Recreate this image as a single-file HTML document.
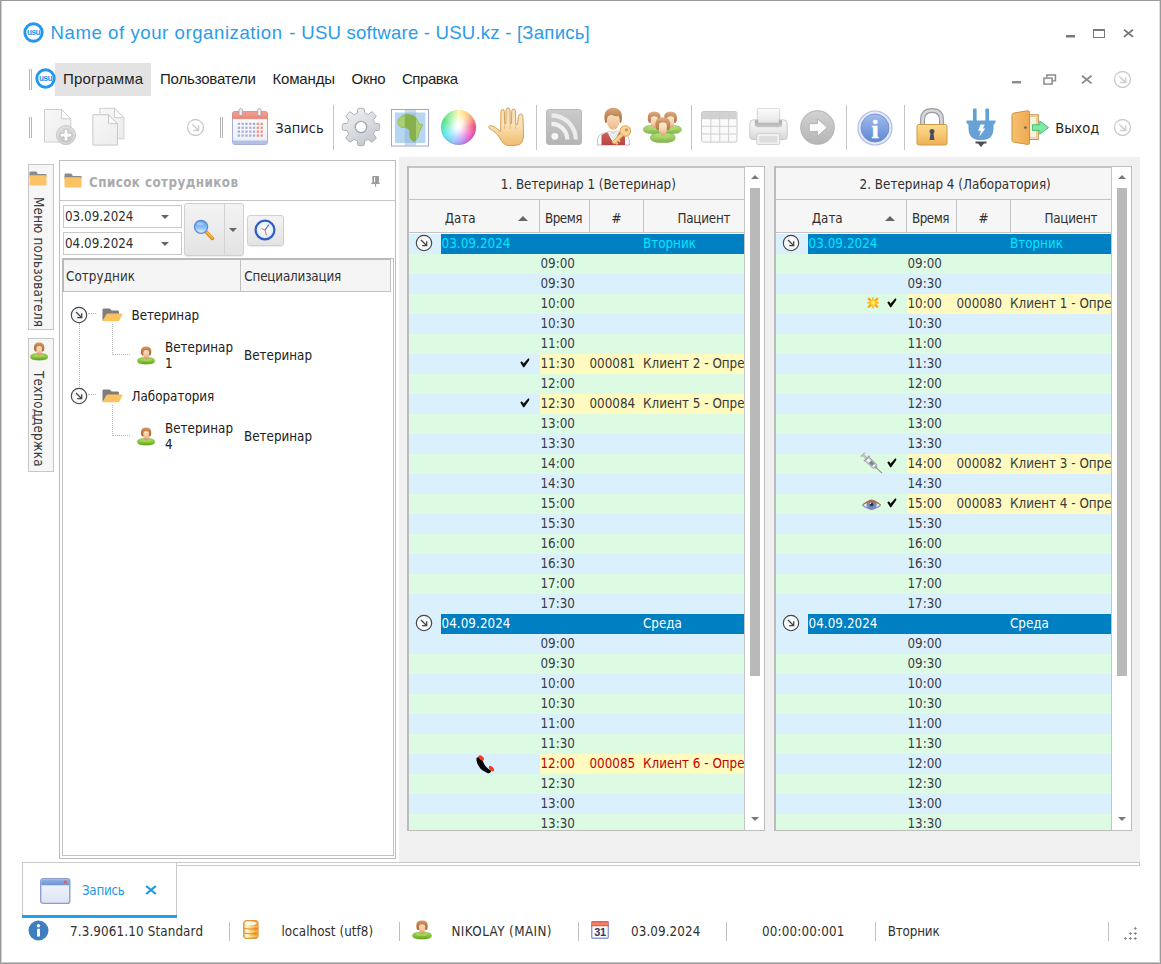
<!DOCTYPE html>
<html lang="ru"><head><meta charset="utf-8"><title>USU</title>
<style>
html,body{margin:0;padding:0;background:#fff;}
body{width:1161px;height:964px;position:relative;overflow:hidden;font-family:'DejaVu Sans Condensed','Liberation Sans',sans-serif;}
#win{position:absolute;left:0;top:0;width:1161px;height:964px;box-sizing:border-box;border:1px solid #9a9a9a;box-shadow:inset 1px 0 0 #d2d2d2,inset -1px 0 0 #e0e0e0,inset 0 -1px 0 #c6c6c6;pointer-events:none}
svg{display:block;width:100%;height:100%;overflow:visible}
</style></head><body>
<div style="position:absolute;left:23.3px;top:21.6px;width:21px;height:21px"><svg viewBox="0 0 21 21" preserveAspectRatio="none"><circle cx="10.5" cy="10.5" r="8.7" fill="#fff" stroke="#2496ee" stroke-width="2.9"/><text x="10.5" y="13.4" text-anchor="middle" font-family="Liberation Sans,sans-serif" font-weight="bold" font-size="8.2" fill="#2496ee" letter-spacing="-0.5">usu</text></svg></div>
<div style="position:absolute;left:50.5px;top:20px;height:26px;line-height:26px;font-family:'Liberation Sans',sans-serif;font-size:18.6px;color:#2b9ce8;white-space:nowrap;letter-spacing:0.559px;">Name of your organization</div>
<div style="position:absolute;left:289.3px;top:20px;height:26px;line-height:26px;font-family:'Liberation Sans',sans-serif;font-size:18.6px;color:#2b9ce8;white-space:nowrap;">-</div>
<div style="position:absolute;left:301.3px;top:20px;height:26px;line-height:26px;font-family:'Liberation Sans',sans-serif;font-size:18.6px;color:#2b9ce8;white-space:nowrap;letter-spacing:0.206px;">USU software - USU.kz - [Запись]</div>
<div style="position:absolute;left:1066px;top:35px;width:9px;height:2px;background:#7a7a7a"></div>
<div style="position:absolute;left:1066px;top:37px;width:9px;height:1px;background:#bcbcbc"></div>
<div style="position:absolute;left:1093px;top:29px;width:12px;height:9px;border:1px solid #7a7a7a;border-top:2px solid #7a7a7a;box-sizing:border-box"></div>
<div style="position:absolute;left:1122.5px;top:29px;width:11px;height:8.6px"><svg viewBox="0 0 11 10" preserveAspectRatio="none"><path d="M1 0.8 L10 9.2 M10 0.8 L1 9.2" stroke="#777" stroke-width="1.9" fill="none"/></svg></div>
<div style="position:absolute;left:29px;top:69px;width:1px;height:21px;background:#b5b5b5"></div>
<div style="position:absolute;left:31px;top:69px;width:1px;height:21px;background:#b5b5b5"></div>
<div style="position:absolute;left:55px;top:63px;width:96px;height:33px;background:#e3e3e3"></div>
<div style="position:absolute;left:34.6px;top:68.2px;width:21px;height:21px"><svg viewBox="0 0 21 21" preserveAspectRatio="none"><circle cx="10.5" cy="10.5" r="8.7" fill="#fff" stroke="#2496ee" stroke-width="2.9"/><text x="10.5" y="13.4" text-anchor="middle" font-family="Liberation Sans,sans-serif" font-weight="bold" font-size="8.2" fill="#2496ee" letter-spacing="-0.5">usu</text></svg></div>
<div style="position:absolute;left:63px;top:69px;height:20px;line-height:20px;font-family:'Liberation Sans',sans-serif;font-size:15px;color:#1e1e1e;white-space:nowrap;letter-spacing:0.176px;">Программа</div>
<div style="position:absolute;left:160px;top:69px;height:20px;line-height:20px;font-family:'Liberation Sans',sans-serif;font-size:15px;color:#1e1e1e;white-space:nowrap;letter-spacing:-0.173px;">Пользователи</div>
<div style="position:absolute;left:272.5px;top:69px;height:20px;line-height:20px;font-family:'Liberation Sans',sans-serif;font-size:15px;color:#1e1e1e;white-space:nowrap;letter-spacing:-0.177px;">Команды</div>
<div style="position:absolute;left:351.5px;top:69px;height:20px;line-height:20px;font-family:'Liberation Sans',sans-serif;font-size:15px;color:#1e1e1e;white-space:nowrap;letter-spacing:-0.286px;">Окно</div>
<div style="position:absolute;left:402px;top:69px;height:20px;line-height:20px;font-family:'Liberation Sans',sans-serif;font-size:15px;color:#1e1e1e;white-space:nowrap;letter-spacing:-0.474px;">Справка</div>
<div style="position:absolute;left:1012px;top:81px;width:9px;height:2px;background:#8c8c8c"></div>
<div style="position:absolute;left:1012px;top:83px;width:9px;height:1px;background:#c8c8c8"></div>
<div style="position:absolute;left:1043px;top:74px;width:13.4px;height:11px"><svg viewBox="0 0 14 12" preserveAspectRatio="none"><path d="M4 3.5 V1 H13 V7.5 H10" fill="none" stroke="#8a8a8a" stroke-width="1.6"/><rect x="1" y="4.5" width="8.5" height="6.5" fill="#fff" stroke="#8a8a8a" stroke-width="1.6"/></svg></div>
<div style="position:absolute;left:1081px;top:75px;width:11.5px;height:9.2px"><svg viewBox="0 0 12 10" preserveAspectRatio="none"><path d="M1 0.8 L11 9.2 M11 0.8 L1 9.2" stroke="#8a8a8a" stroke-width="1.9" fill="none"/></svg></div>
<div style="position:absolute;left:1113px;top:70px;width:19px;height:19px"><svg viewBox="0 0 19 19" preserveAspectRatio="none"><circle cx="9.5" cy="9.5" r="8" fill="#fff" stroke="#c9c9c9" stroke-width="1.3"/><path d="M6.2 6.2 L12.3 12.3 M12.6 7.2 V12.6 H7.2" fill="none" stroke="#cfcfcf" stroke-width="1.5"/></svg></div>
<div style="position:absolute;left:29px;top:117px;width:1px;height:21px;background:#b5b5b5"></div>
<div style="position:absolute;left:31px;top:117px;width:1px;height:21px;background:#b5b5b5"></div>
<div style="position:absolute;left:44px;top:108px;width:33px;height:38px"><svg viewBox="0 0 33 38" preserveAspectRatio="none"><defs><linearGradient id="dp1" x1="0" y1="0" x2="1" y2="1"><stop offset="0" stop-color="#f7f7f7"/><stop offset="1" stop-color="#ededed"/></linearGradient><linearGradient id="dp2" x1="0" y1="0" x2="0" y2="1"><stop offset="0" stop-color="#dedede"/><stop offset="1" stop-color="#c4c4c4"/></linearGradient></defs><path d="M0.5 1.500 H17.500 L26.800 10.800 V34 H0.500 Z" fill="url(#dp1)" stroke="#cdcdcd" stroke-width="1"/><path d="M17.500 1.500 V10.800 H26.800 Z" fill="#fbfbfb" stroke="#cdcdcd" stroke-width="1" stroke-linejoin="round"/><circle cx="22" cy="27.100" r="9.500" fill="url(#dp2)" stroke="#c6c6c6" stroke-width="1"/><circle cx="22" cy="27.100" r="8.300" fill="none" stroke="#e4e4e4" stroke-width="0.8"/><path d="M20.200 21.300 H23.800 V25.300 H27.800 V28.900 H23.800 V32.900 H20.200 V28.900 H16.200 V25.300 H20.200 Z" fill="#fdfdfd" stroke="#b4b4b4" stroke-width="0.7"/></svg></div>
<div style="position:absolute;left:91.5px;top:106.5px;width:33px;height:39px"><svg viewBox="0 0 33 39" preserveAspectRatio="none"><defs><linearGradient id="cp1" x1="0" y1="0" x2="1" y2="1"><stop offset="0" stop-color="#f8f8f8"/><stop offset="1" stop-color="#ececec"/></linearGradient></defs><path d="M7.800 1.300 H22.500 L31.900 10.700 V31.800 H7.800 Z" fill="url(#cp1)" stroke="#cfcfcf"/><path d="M22.500 1.300 V10.700 H31.900 Z" fill="#fbfbfb" stroke="#cfcfcf" stroke-linejoin="round"/><path d="M0.900 7.700 H16.500 L25.500 16.700 V38.100 H0.900 Z" fill="url(#cp1)" stroke="#c9c9c9"/><path d="M16.500 7.700 V16.700 H25.500 Z" fill="#fcfcfc" stroke="#c9c9c9" stroke-linejoin="round"/></svg></div>
<div style="position:absolute;left:186px;top:118px;width:19px;height:19px"><svg viewBox="0 0 19 19" preserveAspectRatio="none"><circle cx="9.5" cy="9.5" r="8" fill="#fff" stroke="#c9c9c9" stroke-width="1.3"/><path d="M6.2 6.2 L12.3 12.3 M12.6 7.2 V12.6 H7.2" fill="none" stroke="#cfcfcf" stroke-width="1.5"/></svg></div>
<div style="position:absolute;left:220px;top:117px;width:1px;height:21px;background:#b5b5b5"></div>
<div style="position:absolute;left:222px;top:117px;width:1px;height:21px;background:#b5b5b5"></div>
<div style="position:absolute;left:232px;top:108px;width:37px;height:38px"><svg viewBox="0 0 37 38" preserveAspectRatio="none"><defs><linearGradient id="cl1" x1="0" y1="0" x2="0" y2="1"><stop offset="0" stop-color="#ffffff"/><stop offset="1" stop-color="#eaeef7"/></linearGradient><linearGradient id="cl2" x1="0" y1="0" x2="0" y2="1"><stop offset="0" stop-color="#f2a494"/><stop offset="1" stop-color="#ea8676"/></linearGradient></defs><rect x="0.500" y="3.700" width="35" height="32.800" rx="2.200" fill="url(#cl1)" stroke="#a4b0da" stroke-width="1"/><path d="M1 32.500 H35 V34.500 Q35 36 33.500 36 H2.500 Q1 36 1 34.500 Z" fill="#b2bfe6"/><path d="M0.500 10.700 V5.900 Q0.500 3.700 2.700 3.700 H33.300 Q35.500 3.700 35.500 5.900 V10.700 Z" fill="url(#cl2)" stroke="#e08878" stroke-width="0.8"/><rect x="5.70" y="14.70" width="2.300" height="2.300" fill="#a9b0d2"/><rect x="9.50" y="14.70" width="2.300" height="2.300" fill="#a9b0d2"/><rect x="13.30" y="14.70" width="2.300" height="2.300" fill="#a9b0d2"/><rect x="17.10" y="14.70" width="2.300" height="2.300" fill="#a9b0d2"/><rect x="20.90" y="14.70" width="2.300" height="2.300" fill="#a9b0d2"/><rect x="24.70" y="14.70" width="2.300" height="2.300" fill="#f0907e"/><rect x="28.50" y="14.70" width="2.300" height="2.300" fill="#f0907e"/><rect x="5.70" y="18.60" width="2.300" height="2.300" fill="#a9b0d2"/><rect x="9.50" y="18.60" width="2.300" height="2.300" fill="#a9b0d2"/><rect x="13.30" y="18.60" width="2.300" height="2.300" fill="#a9b0d2"/><rect x="17.10" y="18.60" width="2.300" height="2.300" fill="#a9b0d2"/><rect x="20.90" y="18.60" width="2.300" height="2.300" fill="#a9b0d2"/><rect x="24.70" y="18.60" width="2.300" height="2.300" fill="#f0907e"/><rect x="28.50" y="18.60" width="2.300" height="2.300" fill="#f0907e"/><rect x="5.70" y="22.50" width="2.300" height="2.300" fill="#a9b0d2"/><rect x="9.50" y="22.50" width="2.300" height="2.300" fill="#a9b0d2"/><rect x="13.30" y="22.50" width="2.300" height="2.300" fill="#a9b0d2"/><rect x="17.10" y="22.50" width="2.300" height="2.300" fill="#a9b0d2"/><rect x="20.90" y="22.50" width="2.300" height="2.300" fill="#a9b0d2"/><rect x="24.70" y="22.50" width="2.300" height="2.300" fill="#f0907e"/><rect x="28.50" y="22.50" width="2.300" height="2.300" fill="#f0907e"/><rect x="5.70" y="26.40" width="2.300" height="2.300" fill="#a9b0d2"/><rect x="9.50" y="26.40" width="2.300" height="2.300" fill="#a9b0d2"/><rect x="13.30" y="26.40" width="2.300" height="2.300" fill="#a9b0d2"/><rect x="17.10" y="26.40" width="2.300" height="2.300" fill="#a9b0d2"/><rect x="20.90" y="26.40" width="2.300" height="2.300" fill="#a9b0d2"/><rect x="24.70" y="26.40" width="2.300" height="2.300" fill="#f0907e"/><rect x="28.50" y="26.40" width="2.300" height="2.300" fill="#f0907e"/><rect x="7" y="0.700" width="3.400" height="6.900" rx="1.300" fill="#eceef2" stroke="#9da0aa" stroke-width="0.8"/><rect x="25.600" y="0.700" width="3.400" height="6.900" rx="1.300" fill="#eceef2" stroke="#9da0aa" stroke-width="0.8"/></svg></div>
<div style="position:absolute;left:275.3px;top:117.5px;height:20px;line-height:20px;font-family:'DejaVu Sans Condensed','Liberation Sans',sans-serif;font-size:14.5px;color:#1e1e1e;white-space:nowrap;letter-spacing:0.013px;">Запись</div>
<div style="position:absolute;left:333px;top:105px;width:1px;height:45px;background:#c4c4c4"></div>
<div style="position:absolute;left:341.9px;top:108.4px;width:38px;height:38px"><svg viewBox="0 0 38 38" preserveAspectRatio="none"><defs><linearGradient id="gr1" x1="0.2" y1="0" x2="0.8" y2="1"><stop offset="0" stop-color="#eef0f3"/><stop offset="0.5" stop-color="#d9dce1"/><stop offset="1" stop-color="#c2c6cd"/></linearGradient></defs><path d="M19.00 0.30 L19.49 0.31 L19.98 0.33 L20.47 0.36 L20.95 0.40 L21.44 0.46 L21.92 0.55 L22.27 1.38 L22.43 2.88 L22.52 4.35 L22.69 5.22 L23.03 5.38 L23.39 5.49 L23.74 5.61 L24.09 5.74 L24.43 5.88 L24.78 6.03 L25.11 6.18 L25.45 6.35 L25.78 6.52 L26.13 6.65 L26.87 6.16 L27.98 5.18 L29.15 4.23 L29.98 3.89 L30.38 4.16 L30.77 4.47 L31.14 4.78 L31.51 5.10 L31.87 5.44 L32.22 5.78 L32.56 6.13 L32.90 6.49 L33.22 6.86 L33.53 7.23 L33.84 7.62 L34.11 8.02 L33.77 8.85 L32.82 10.02 L31.84 11.13 L31.35 11.87 L31.48 12.22 L31.65 12.55 L31.82 12.89 L31.97 13.22 L32.12 13.57 L32.26 13.91 L32.39 14.26 L32.51 14.61 L32.62 14.97 L32.78 15.31 L33.65 15.48 L35.12 15.57 L36.62 15.73 L37.45 16.08 L37.54 16.56 L37.60 17.05 L37.64 17.53 L37.67 18.02 L37.69 18.51 L37.70 19.00 L37.69 19.49 L37.67 19.98 L37.64 20.47 L37.60 20.95 L37.54 21.44 L37.45 21.92 L36.62 22.27 L35.12 22.43 L33.65 22.52 L32.78 22.69 L32.62 23.03 L32.51 23.39 L32.39 23.74 L32.26 24.09 L32.12 24.43 L31.97 24.78 L31.82 25.11 L31.65 25.45 L31.48 25.78 L31.35 26.13 L31.84 26.87 L32.82 27.98 L33.77 29.15 L34.11 29.98 L33.84 30.38 L33.53 30.77 L33.22 31.14 L32.90 31.51 L32.56 31.87 L32.22 32.22 L31.87 32.56 L31.51 32.90 L31.14 33.22 L30.77 33.53 L30.38 33.84 L29.98 34.11 L29.15 33.77 L27.98 32.82 L26.87 31.84 L26.13 31.35 L25.78 31.48 L25.45 31.65 L25.11 31.82 L24.78 31.97 L24.43 32.12 L24.09 32.26 L23.74 32.39 L23.39 32.51 L23.03 32.62 L22.69 32.78 L22.52 33.65 L22.43 35.12 L22.27 36.62 L21.92 37.45 L21.44 37.54 L20.95 37.60 L20.47 37.64 L19.98 37.67 L19.49 37.69 L19.00 37.70 L18.51 37.69 L18.02 37.67 L17.53 37.64 L17.05 37.60 L16.56 37.54 L16.08 37.45 L15.73 36.62 L15.57 35.12 L15.48 33.65 L15.31 32.78 L14.97 32.62 L14.61 32.51 L14.26 32.39 L13.91 32.26 L13.57 32.12 L13.22 31.97 L12.89 31.82 L12.55 31.65 L12.22 31.48 L11.87 31.35 L11.13 31.84 L10.02 32.82 L8.85 33.77 L8.02 34.11 L7.62 33.84 L7.23 33.53 L6.86 33.22 L6.49 32.90 L6.13 32.56 L5.78 32.22 L5.44 31.87 L5.10 31.51 L4.78 31.14 L4.47 30.77 L4.16 30.38 L3.89 29.98 L4.23 29.15 L5.18 27.98 L6.16 26.87 L6.65 26.13 L6.52 25.78 L6.35 25.45 L6.18 25.11 L6.03 24.78 L5.88 24.43 L5.74 24.09 L5.61 23.74 L5.49 23.39 L5.38 23.03 L5.22 22.69 L4.35 22.52 L2.88 22.43 L1.38 22.27 L0.55 21.92 L0.46 21.44 L0.40 20.95 L0.36 20.47 L0.33 19.98 L0.31 19.49 L0.30 19.00 L0.31 18.51 L0.33 18.02 L0.36 17.53 L0.40 17.05 L0.46 16.56 L0.55 16.08 L1.38 15.73 L2.88 15.57 L4.35 15.48 L5.22 15.31 L5.38 14.97 L5.49 14.61 L5.61 14.26 L5.74 13.91 L5.88 13.57 L6.03 13.22 L6.18 12.89 L6.35 12.55 L6.52 12.22 L6.65 11.87 L6.16 11.13 L5.18 10.02 L4.23 8.85 L3.89 8.02 L4.16 7.62 L4.47 7.23 L4.78 6.86 L5.10 6.49 L5.44 6.13 L5.78 5.78 L6.13 5.44 L6.49 5.10 L6.86 4.78 L7.23 4.47 L7.62 4.16 L8.02 3.89 L8.85 4.23 L10.02 5.18 L11.13 6.16 L11.87 6.65 L12.22 6.52 L12.55 6.35 L12.89 6.18 L13.22 6.03 L13.57 5.88 L13.91 5.74 L14.26 5.61 L14.61 5.49 L14.97 5.38 L15.31 5.22 L15.48 4.35 L15.57 2.88 L15.73 1.38 L16.08 0.55 L16.56 0.46 L17.05 0.40 L17.53 0.36 L18.02 0.33 L18.51 0.31Z" fill="url(#gr1)" stroke="#a7abb3" stroke-width="1" stroke-linejoin="round"/><circle cx="19" cy="19" r="5.700" fill="#fff" stroke="#a2a6ae" stroke-width="1.300"/></svg></div>
<div style="position:absolute;left:391px;top:108.5px;width:38px;height:37.5px"><svg viewBox="0 0 38 37.5" preserveAspectRatio="none"><rect x="0.500" y="0.500" width="37" height="36.500" fill="#fff" stroke="#9da3d8" stroke-width="1"/><rect x="3.900" y="3.500" width="30.500" height="30.600" fill="#b7d7f1"/><rect x="13.800" y="1" width="11.200" height="35.500" fill="#86abd2" opacity="0.42"/><g transform="translate(0 1.36) scale(1 0.961)"><path d="M15.5 4.1 Q11 5 8.4 8 Q6.300 10 6.8 12.5 Q7.200 15.500 9 17 Q11.500 18.300 14.2 17.7 Q17.500 18.500 18.7 21 Q18.600 25 19.4 28.7 Q20.300 31 22 32 L23.9 32.3 Q26 30 27.1 27.4 Q27.600 24.500 28.4 22.2 Q29.500 19.500 31 17 L31.7 15.1 L27.8 13.8 Q27 10.500 25.2 8 Q24 6 22 5.4 Z" fill="#a9d070" stroke="#8ab356" stroke-width="0.7"/><path d="M15.5 4.1 L22 5.4 Q23.500 5.900 25 7.700 V30.600 L23.9 32.3 L22 32 Q20.300 31 19.4 28.7 Q18.600 25 18.7 21 Q17.500 18.500 14.2 17.7 L13.800 17.700 V4.500 Z" fill="#7fa946" opacity="0.8"/></g></svg></div>
<div style="position:absolute;left:440.5px;top:109.5px;width:35.6px;height:35.6px"><div style="width:100%;height:100%;border-radius:50%;box-shadow:inset 0 -1px 2px rgba(120,120,160,.35);background:radial-gradient(circle at 50% 46%,#fff 0%,rgba(255,255,255,.9) 14%,rgba(255,255,255,.35) 45%,rgba(255,255,255,0) 68%),conic-gradient(from 0deg,#fff39a 0deg,#ffc76a 35deg,#f0406f 85deg,#e650c8 130deg,#b48cf0 165deg,#8fc4ff 200deg,#4fe9ee 245deg,#3fe07a 295deg,#9af08a 335deg,#fff39a 360deg)"></div></div>
<div style="position:absolute;left:487px;top:107px;width:39px;height:39px"><svg viewBox="0 0 39 39" preserveAspectRatio="none"><defs><linearGradient id="hd1" x1="0" y1="0" x2="0" y2="1"><stop offset="0" stop-color="#f6e0b8"/><stop offset="0.45" stop-color="#f8e2b6"/><stop offset="1" stop-color="#f0bb6e"/></linearGradient></defs><path d="M1.9 20.8 Q1.5 18.600 3.5 18.600 Q6 18.700 8.5 20.500 L13.700 24.500 L13.900 4.800 Q14 2.300 15.650 2.300 Q17.300 2.300 17.400 4.800 L17.700 16.500 L18.900 16.500 L19.100 3.200 Q19.300 0.800 21.050 0.800 Q22.800 0.800 23 3.200 L23.200 16.500 L24.500 16.500 L24.700 4.400 Q24.900 2 26.600 2 Q28.300 2 28.500 4.400 L28.700 17 L30.500 17.500 L31.400 9.300 Q31.900 7 33.700 7 Q35.900 7.200 35.900 9.600 L36.500 25.500 L36.500 30 Q36 35 32.700 37.600 Q27 39 21 38.500 Q18 38 16.500 36.300 Q13 32 10.700 27.900 Q8 25 5.500 23.400 Q3 22.500 1.900 20.800 Z" fill="url(#hd1)" stroke="#d6a05a" stroke-width="1" stroke-linejoin="round"/><path d="M17.550 16.500 V22 M23.100 16.500 V22 M28.600 17 V22" stroke="#e2b67a" stroke-width="0.9" opacity="0.8"/></svg></div>
<div style="position:absolute;left:536px;top:105px;width:1px;height:45px;background:#c4c4c4"></div>
<div style="position:absolute;left:546px;top:109px;width:36px;height:36px"><svg viewBox="0 0 36 36" preserveAspectRatio="none"><defs><linearGradient id="rs1" x1="0" y1="0" x2="0" y2="1"><stop offset="0" stop-color="#cbcbcb"/><stop offset="1" stop-color="#b4b4b4"/></linearGradient></defs><rect x="0.500" y="0.500" width="35" height="35" rx="2.500" fill="url(#rs1)" stroke="#b9b9b9" stroke-width="1"/><circle cx="8.800" cy="27.300" r="3.400" fill="#f7f7f7"/><path d="M5.500 14.800 A15.800 15.800 0 0 1 21.300 30.600" fill="none" stroke="#f0f0f0" stroke-width="4.200"/><path d="M5.500 6.300 A24.300 24.300 0 0 1 29.800 30.600" fill="none" stroke="#ececec" stroke-width="4.200"/></svg></div>
<div style="position:absolute;left:596px;top:107px;width:37px;height:39px"><svg viewBox="0 0 37 39" preserveAspectRatio="none"><defs><linearGradient id="uk1" x1="0" y1="0" x2="0" y2="1"><stop offset="0" stop-color="#fbe4c6"/><stop offset="1" stop-color="#eab88c"/></linearGradient><linearGradient id="uk2" x1="0" y1="0" x2="0" y2="1"><stop offset="0" stop-color="#d8a878"/><stop offset="1" stop-color="#a86a38"/></linearGradient><linearGradient id="uk3" x1="0" y1="0" x2="0" y2="1"><stop offset="0" stop-color="#d0605c"/><stop offset="1" stop-color="#b84444"/></linearGradient></defs><path d="M1.500 38 Q0.500 30 4.500 27.500 Q8 25.500 12.500 25 H22 Q26.500 25.500 30 27.500 Q34 30 33.500 38 Z" fill="#fbfbfb" stroke="#b4b4b4" stroke-width="0.8"/><path d="M5.500 38 V28 Q8.500 26.200 11.500 25.500 L17.200 36 L23 25.500 Q26 26.200 29 28 V38 Z" fill="url(#uk3)"/><path d="M11.500 25.500 L17.200 31 L23 25.500 L20.500 23.500 L17.200 27 L14 23.500 Z" fill="#f1f1f1" stroke="#b9b9b9" stroke-width="0.5"/><ellipse cx="17.200" cy="14" rx="6.300" ry="8.800" fill="url(#uk1)"/><path d="M8.600 12.500 Q7.200 1.300 17.200 0.800 Q27.200 1.300 25.800 12.500 Q25.800 15 24.600 16 L23.600 15.500 Q24 11.500 22.500 9 Q19 9.800 16 8 Q13.500 7.500 11.900 9.500 Q10.500 12 10.800 15.500 L9.800 16 Q8.600 15 8.600 12.500 Z" fill="url(#uk2)"/><g transform="rotate(-45 29.300 24)"><circle cx="29.300" cy="24" r="5.300" fill="#f8d394" stroke="#dba04a" stroke-width="1"/><circle cx="30.800" cy="24" r="1.600" fill="#c99a6a"/><rect x="12" y="22.300" width="12.500" height="3.400" rx="0.800" fill="#f8d394" stroke="#dba04a" stroke-width="0.8"/><rect x="13.500" y="25.300" width="2.200" height="2.600" fill="#efc070"/><rect x="17" y="25.300" width="2.200" height="2.600" fill="#efc070"/></g></svg></div>
<div style="position:absolute;left:642px;top:109px;width:41px;height:36px"><svg viewBox="0 0 41 36" preserveAspectRatio="none"><defs><linearGradient id="gb" x1="0" y1="0" x2="0" y2="1"><stop offset="0" stop-color="#b4d880"/><stop offset="0.55" stop-color="#9ccb62"/><stop offset="1" stop-color="#7fb546"/></linearGradient><linearGradient id="gf" x1="0" y1="0" x2="0" y2="1"><stop offset="0" stop-color="#fdeed8"/><stop offset="0.6" stop-color="#f6d2ae"/><stop offset="1" stop-color="#e0a078"/></linearGradient><linearGradient id="gh" x1="0" y1="0" x2="0" y2="1"><stop offset="0" stop-color="#e2b088"/><stop offset="0.35" stop-color="#cf9464"/><stop offset="1" stop-color="#b07844"/></linearGradient></defs><g transform="translate(0.82 2.00) scale(1.250)"><path d="M0.3 15 Q0.3 12.200 5 11.600 Q9.100 10.900 13.200 11.600 Q17.900 12.200 17.900 15 Q17.900 18.300 9.100 18.300 Q0.300 18.300 0.300 15 Z" fill="url(#gb)" stroke="#6aa030" stroke-width="0.4" stroke-opacity="0.7"/><ellipse cx="9.1" cy="13.600" rx="5.800" ry="1.700" fill="#b4e070" opacity="0.55"/><ellipse cx="9.200" cy="8.500" rx="2.900" ry="4.900" fill="url(#gf)"/><path d="M3.900 6 Q3.500 0.400 9.100 0.400 Q14.700 0.400 14.300 6 Q14.400 8.600 13.100 9.600 L11.900 9.400 Q12.300 6.200 11.500 4.700 Q9 3.500 6.900 4.700 Q6.100 6.200 6.500 9.400 L5.300 9.600 Q3.800 8.600 3.900 6 Z" fill="url(#gh)"/></g><g transform="translate(17.12 2.00) scale(1.250)"><path d="M0.3 15 Q0.3 12.200 5 11.600 Q9.100 10.900 13.200 11.600 Q17.900 12.200 17.900 15 Q17.900 18.300 9.100 18.300 Q0.300 18.300 0.300 15 Z" fill="url(#gb)" stroke="#6aa030" stroke-width="0.4" stroke-opacity="0.7"/><ellipse cx="9.1" cy="13.600" rx="5.800" ry="1.700" fill="#b4e070" opacity="0.55"/><ellipse cx="9.200" cy="8.500" rx="2.900" ry="4.900" fill="url(#gf)"/><path d="M3.900 6 Q3.500 0.400 9.100 0.400 Q14.700 0.400 14.300 6 Q14.400 8.600 13.100 9.600 L11.900 9.400 Q12.300 6.200 11.500 4.700 Q9 3.500 6.900 4.700 Q6.100 6.200 6.500 9.400 L5.300 9.600 Q3.800 8.600 3.900 6 Z" fill="url(#gh)"/></g><g transform="translate(7.88 7.60) scale(1.420)"><path d="M0.3 15 Q0.3 12.200 5 11.600 Q9.100 10.900 13.200 11.600 Q17.900 12.200 17.900 15 Q17.900 18.300 9.100 18.300 Q0.300 18.300 0.300 15 Z" fill="url(#gb)" stroke="#6aa030" stroke-width="0.4" stroke-opacity="0.7"/><ellipse cx="9.1" cy="13.600" rx="5.800" ry="1.700" fill="#b4e070" opacity="0.55"/><ellipse cx="9.200" cy="8.500" rx="2.900" ry="4.900" fill="url(#gf)"/><path d="M3.900 6 Q3.500 0.400 9.100 0.400 Q14.700 0.400 14.300 6 Q14.400 8.600 13.100 9.600 L11.900 9.400 Q12.300 6.200 11.500 4.700 Q9 3.500 6.900 4.700 Q6.100 6.200 6.500 9.400 L5.300 9.600 Q3.800 8.600 3.900 6 Z" fill="url(#gh)"/></g></svg></div>
<div style="position:absolute;left:691px;top:105px;width:1px;height:45px;background:#c4c4c4"></div>
<div style="position:absolute;left:701px;top:111.2px;width:36.5px;height:31.6px"><svg viewBox="0 0 37 33" preserveAspectRatio="none"><rect x="0.5" y="0.5" width="36" height="32" rx="2" fill="#fafafa" stroke="#c6c6c6"/><path d="M1 8 V2.500 Q1 1 2.500 1 H34.500 Q36 1 36 2.500 V8 Z" fill="#d2d2d2"/><path d="M10 1 V32" stroke="#cdcdcd" stroke-width="1"/><path d="M19 1 V32" stroke="#cdcdcd" stroke-width="1"/><path d="M28 1 V32" stroke="#cdcdcd" stroke-width="1"/><path d="M1 8 H36" stroke="#cdcdcd" stroke-width="1"/><path d="M1 16 H36" stroke="#cdcdcd" stroke-width="1"/><path d="M1 24 H36" stroke="#cdcdcd" stroke-width="1"/></svg></div>
<div style="position:absolute;left:749px;top:107.8px;width:39px;height:37.4px"><svg viewBox="0 0 40 38" preserveAspectRatio="none"><defs><linearGradient id="pr1" x1="0" y1="0" x2="0" y2="1"><stop offset="0" stop-color="#f6f6f6"/><stop offset="0.5" stop-color="#ececec"/><stop offset="1" stop-color="#d6d6d6"/></linearGradient><linearGradient id="pr2" x1="0" y1="0" x2="0" y2="1"><stop offset="0" stop-color="#fcfcfc"/><stop offset="1" stop-color="#e4e4e4"/></linearGradient><linearGradient id="pr3" x1="0" y1="0" x2="0" y2="1"><stop offset="0" stop-color="#a9a9a9"/><stop offset="1" stop-color="#c9c9c9"/></linearGradient></defs><rect x="8.500" y="0.500" width="23" height="15" rx="1" fill="url(#pr2)" stroke="#d2d2d2"/><path d="M4.500 12 H35.500 Q38.800 12 39.200 16 V29 Q39.200 32 36.500 32 H3.500 Q0.800 32 0.800 29 V16 Q1.200 12 4.500 12 Z" fill="url(#pr1)" stroke="#cacaca"/><path d="M6 12.500 H34 V16.500 Q34 19.500 30.500 19.500 H9.500 Q6 19.500 6 16.500 Z" fill="url(#pr3)"/><rect x="9.500" y="0.800" width="21" height="14.200" fill="url(#pr2)"/><rect x="8" y="26" width="23.500" height="11" rx="1" fill="#f2f2f2" stroke="#cdcdcd"/><rect x="10.500" y="28.500" width="18.500" height="6.500" fill="#dcdcdc"/></svg></div>
<div style="position:absolute;left:800px;top:110px;width:35px;height:35px"><svg viewBox="0 0 36 36" preserveAspectRatio="none"><defs><linearGradient id="ac1" x1="0" y1="0" x2="0" y2="1"><stop offset="0" stop-color="#d2d2d2"/><stop offset="1" stop-color="#b5b5b5"/></linearGradient></defs><circle cx="18" cy="18" r="17.3" fill="url(#ac1)" stroke="#b0b0b0" stroke-width="1"/><path d="M9.500 14 H18 V9 L28 18 L18 27 V22 H9.500 Z" fill="#fdfdfd" stroke="#a9a9a9" stroke-width="0.8" stroke-linejoin="round"/></svg></div>
<div style="position:absolute;left:846px;top:105px;width:1px;height:45px;background:#c4c4c4"></div>
<div style="position:absolute;left:857px;top:110px;width:36px;height:36px"><svg viewBox="0 0 36 36" preserveAspectRatio="none"><defs><linearGradient id="in1" x1="0" y1="0" x2="0" y2="1"><stop offset="0" stop-color="#a3bdec"/><stop offset="1" stop-color="#5d86d4"/></linearGradient></defs><circle cx="18" cy="18" r="17" fill="#e6eaf7" stroke="#b4bee4" stroke-width="1.2"/><circle cx="18" cy="18" r="14" fill="url(#in1)" stroke="#6a8ad0" stroke-width="0.8"/><text x="18" y="27.5" text-anchor="middle" font-family="Liberation Serif,serif" font-weight="bold" font-size="26" fill="#fff" stroke="#fff" stroke-width="0.6">i</text></svg></div>
<div style="position:absolute;left:904px;top:105px;width:1px;height:45px;background:#c4c4c4"></div>
<div style="position:absolute;left:916px;top:108px;width:32px;height:38px"><svg viewBox="0 0 32 38" preserveAspectRatio="none"><defs><linearGradient id="lk1" x1="0" y1="0" x2="0" y2="1"><stop offset="0" stop-color="#fbdc94"/><stop offset="0.5" stop-color="#f6c872"/><stop offset="1" stop-color="#eeaf55"/></linearGradient></defs><path d="M6.500 17 V12 Q6.500 2.500 16 2.500 Q25.500 2.500 25.500 12 V17" fill="none" stroke="#9a9da2" stroke-width="5"/><path d="M6.500 17 V12 Q6.500 2.500 16 2.500 Q25.500 2.500 25.500 12 V17" fill="none" stroke="#d4d7db" stroke-width="2.600"/><rect x="1" y="16.500" width="30" height="20.500" rx="2" fill="url(#lk1)" stroke="#d09a45" stroke-width="1"/><path d="M16 21 Q18.500 21 18.500 23.500 Q18.500 25 17.500 25.800 L18.500 32 H13.500 L14.500 25.800 Q13.500 25 13.500 23.500 Q13.500 21 16 21 Z" fill="#4a4e5e"/></svg></div>
<div style="position:absolute;left:965px;top:108px;width:32px;height:40px"><svg viewBox="0 0 32 40" preserveAspectRatio="none"><rect x="8" y="0.500" width="3.600" height="13" rx="1" fill="#63a0d4"/><rect x="20.400" y="0.500" width="3.600" height="13" rx="1" fill="#63a0d4"/><path d="M1.500 12.500 H30.500 Q31 14 30 15.500 L28.500 16.500 V21 Q28.500 30.500 19 32 H13 Q3.500 30.500 3.500 21 V16.500 L2 15.500 Q1 14 1.500 12.500 Z" fill="#67a2d6"/><path d="M15.500 16.500 H19.800 L17.800 20.500 H20.300 L14.300 28.800 L15.800 22.800 H13.200 Z" fill="#fff"/><path d="M10.500 33.500 H21.500 V35.500 H19 L16 39 L13 35.500 H10.500 Z" fill="#4a4f58"/></svg></div>
<div style="position:absolute;left:1010.5px;top:110px;width:39px;height:35.2px"><svg viewBox="0 0 40 37" preserveAspectRatio="none"><defs><linearGradient id="dr1" x1="0" y1="0" x2="1" y2="0"><stop offset="0" stop-color="#f6c070"/><stop offset="1" stop-color="#eeaa50"/></linearGradient></defs><rect x="17" y="5" width="11" height="26" fill="#f6e3b8" stroke="#b98a4a" stroke-width="1"/><rect x="19" y="7" width="7" height="22" fill="#fbf1d8" stroke="#d9b77a" stroke-width="0.6"/><path d="M1 5.500 Q1 3.500 3 3.200 L17 0.800 Q19 0.600 19 2.500 V34.500 Q19 36.400 17 36.200 L3 33.800 Q1 33.500 1 31.500 Z" fill="url(#dr1)" stroke="#c98f3f" stroke-width="1"/><circle cx="14.800" cy="18.500" r="1.500" fill="#7a6a55"/><path d="M22 15.500 H29.500 V11.500 L38.500 18.500 L29.500 25.500 V21.500 H22 Z" fill="#7fe8a4" stroke="#3fbf72" stroke-width="1" stroke-linejoin="round"/></svg></div>
<div style="position:absolute;left:1055.3px;top:117.5px;height:20px;line-height:20px;font-family:'DejaVu Sans Condensed','Liberation Sans',sans-serif;font-size:14.5px;color:#1e1e1e;white-space:nowrap;letter-spacing:0.008px;">Выход</div>
<div style="position:absolute;left:1113px;top:118px;width:19px;height:19px"><svg viewBox="0 0 19 19" preserveAspectRatio="none"><circle cx="9.5" cy="9.5" r="8" fill="#fff" stroke="#c9c9c9" stroke-width="1.3"/><path d="M6.2 6.2 L12.3 12.3 M12.6 7.2 V12.6 H7.2" fill="none" stroke="#cfcfcf" stroke-width="1.5"/></svg></div>
<div style="position:absolute;left:399px;top:157px;width:741px;height:705px;background:#f0f0f0"></div>
<div style="position:absolute;left:22px;top:862px;width:1118px;height:4px;border:1px solid #c9c9c9;border-left:none;box-sizing:border-box;background:#fff"></div>
<div style="position:absolute;left:28px;top:164px;width:26px;height:166px;border:1px solid #c6c6c6;background:#f6f6f6;box-sizing:border-box"></div>
<div style="position:absolute;left:29px;top:171px;width:18px;height:15px"><svg viewBox="0 0 18 15" preserveAspectRatio="none"><path d="M0.500 3.500 V1.800 Q0.500 0.500 2 0.500 H6.500 Q7.500 0.500 8 1.500 L9 3.500 Z" fill="#8a8a8a"/><rect x="0.5" y="3" width="17" height="3" fill="#8a8a8a"/><rect x="0.5" y="4.200" width="17" height="10.300" rx="0.800" fill="#fbc366"/></svg></div>
<div style="position:absolute;left:24.8px;top:196.5px;width:26px;writing-mode:vertical-rl;font-family:'DejaVu Sans Condensed','Liberation Sans',sans-serif;font-size:13.3px;line-height:26px;letter-spacing:0.222px;color:#3a3a3a;white-space:nowrap;">Меню пользователя</div>
<div style="position:absolute;left:28px;top:338px;width:26px;height:134px;border:1px solid #c6c6c6;background:#f6f6f6;box-sizing:border-box"></div>
<div style="position:absolute;left:30.3px;top:341.6px;width:18.2px;height:18.6px"><svg viewBox="0 0 18.2 18.6" preserveAspectRatio="none"><defs><linearGradient id="ub" x1="0" y1="0" x2="0" y2="1"><stop offset="0" stop-color="#9ad24a"/><stop offset="0.55" stop-color="#86c43a"/><stop offset="1" stop-color="#5f9f1e"/></linearGradient><linearGradient id="uf" x1="0" y1="0" x2="0" y2="1"><stop offset="0" stop-color="#fbe6c4"/><stop offset="0.6" stop-color="#f2c49a"/><stop offset="1" stop-color="#d98a62"/></linearGradient><linearGradient id="uh" x1="0" y1="0" x2="0" y2="1"><stop offset="0" stop-color="#d99a62"/><stop offset="0.35" stop-color="#c98048"/><stop offset="1" stop-color="#a86430"/></linearGradient></defs><g transform="translate(0.00 0.00) scale(1.000)"><path d="M0.3 15 Q0.3 12.200 5 11.600 Q9.100 10.900 13.200 11.600 Q17.900 12.200 17.900 15 Q17.900 18.300 9.100 18.300 Q0.300 18.300 0.300 15 Z" fill="url(#ub)" stroke="#6aa030" stroke-width="0.4" stroke-opacity="0.7"/><ellipse cx="9.1" cy="13.600" rx="5.800" ry="1.700" fill="#b4e070" opacity="0.55"/><ellipse cx="9.200" cy="8.500" rx="2.900" ry="4.900" fill="url(#uf)"/><path d="M3.900 6 Q3.500 0.400 9.100 0.400 Q14.700 0.400 14.300 6 Q14.400 8.600 13.100 9.600 L11.900 9.400 Q12.300 6.200 11.500 4.700 Q9 3.500 6.900 4.700 Q6.100 6.200 6.500 9.400 L5.300 9.600 Q3.800 8.600 3.900 6 Z" fill="url(#uh)"/></g></svg></div>
<div style="position:absolute;left:24.8px;top:370.5px;width:26px;writing-mode:vertical-rl;font-family:'DejaVu Sans Condensed','Liberation Sans',sans-serif;font-size:13.3px;line-height:26px;letter-spacing:0.161px;color:#3a3a3a;white-space:nowrap;">Техподдержка</div>
<div style="position:absolute;left:59px;top:160px;width:337px;height:699px;border:1px solid #bdbdbd;background:#fff;box-sizing:border-box"></div>
<div style="position:absolute;left:64px;top:173px;width:18px;height:15px"><svg viewBox="0 0 18 15" preserveAspectRatio="none"><path d="M0.500 3.500 V1.800 Q0.500 0.500 2 0.500 H6.500 Q7.500 0.500 8 1.500 L9 3.500 Z" fill="#8a8a8a"/><rect x="0.5" y="3" width="17" height="3" fill="#8a8a8a"/><rect x="0.5" y="4.200" width="17" height="10.300" rx="0.800" fill="#fbc366"/></svg></div>
<div style="position:absolute;left:89px;top:173.5px;height:18px;line-height:18px;font-family:'DejaVu Sans Condensed','Liberation Sans',sans-serif;font-size:13.3px;color:#ababab;white-space:nowrap;font-weight:bold;letter-spacing:0.420px;">Список сотрудников</div>
<div style="position:absolute;left:371px;top:175.8px;width:9px;height:10.8px"><svg viewBox="0 0 9 10.8" preserveAspectRatio="none"><path d="M1.300 0 H7.900 V6.300 L9 7.900 H0 L1.300 6.300 Z" fill="#9c9c9c"/><rect x="3" y="1" width="1.100" height="5.300" fill="#f4f4f4"/><rect x="4" y="7.900" width="1.100" height="2.900" fill="#9c9c9c"/></svg></div>
<div style="position:absolute;left:60px;top:200px;width:335px;height:1px;background:#c6c6c6"></div>
<div style="position:absolute;left:63px;top:205px;width:119px;height:23px;border:1px solid #c9c9c9;background:#fff;box-sizing:border-box"></div>
<div style="position:absolute;left:65px;top:208px;height:17px;line-height:17px;font-family:'DejaVu Sans Condensed','Liberation Sans',sans-serif;font-size:13.3px;color:#303030;white-space:nowrap;">03.09.2024</div>
<div style="position:absolute;left:161px;top:215px;width:0;height:0;border-left:4px solid transparent;border-right:4px solid transparent;border-top:4px solid #666"></div>
<div style="position:absolute;left:63px;top:232px;width:119px;height:23px;border:1px solid #c9c9c9;background:#fff;box-sizing:border-box"></div>
<div style="position:absolute;left:65px;top:235px;height:17px;line-height:17px;font-family:'DejaVu Sans Condensed','Liberation Sans',sans-serif;font-size:13.3px;color:#303030;white-space:nowrap;">04.09.2024</div>
<div style="position:absolute;left:161px;top:242px;width:0;height:0;border-left:4px solid transparent;border-right:4px solid transparent;border-top:4px solid #666"></div>
<div style="position:absolute;left:184px;top:203px;width:60px;height:53px;border:1px solid #d0d0d0;border-radius:3px;background:linear-gradient(#f3f3f3,#e3e3e3);box-sizing:border-box;box-shadow:0 1px 1px rgba(0,0,0,.08)"></div>
<div style="position:absolute;left:224px;top:204px;width:1px;height:51px;background:#d2d2d2"></div>
<div style="position:absolute;left:193px;top:219.3px;width:22px;height:21.5px"><svg viewBox="0 0 26 26" preserveAspectRatio="none"><defs><linearGradient id="se1" x1="0" y1="0" x2="0" y2="1"><stop offset="0" stop-color="#5a9cf0"/><stop offset="0.55" stop-color="#8cc0f8"/><stop offset="1" stop-color="#e4f2ff"/></linearGradient></defs><path d="M14 14 L23 23.500" stroke="#d98a1e" stroke-width="4.200" stroke-linecap="round"/><path d="M14.500 14 L23 22.800" stroke="#f6b84a" stroke-width="2" stroke-linecap="round"/><circle cx="9.500" cy="9.500" r="7.800" fill="url(#se1)" stroke="#5f8ad8" stroke-width="1.600"/><ellipse cx="8.500" cy="5.500" rx="4" ry="2" fill="#fff" opacity="0.35"/></svg></div>
<div style="position:absolute;left:229px;top:228px;width:0;height:0;border-left:4px solid transparent;border-right:4px solid transparent;border-top:4px solid #666"></div>
<div style="position:absolute;left:247px;top:215px;width:37px;height:31px;border:1px solid #d0d0d0;border-radius:3px;background:linear-gradient(#f3f3f3,#e3e3e3);box-sizing:border-box;box-shadow:0 1px 1px rgba(0,0,0,.08)"></div>
<div style="position:absolute;left:253.8px;top:218.8px;width:22px;height:22px"><svg viewBox="0 0 22 22" preserveAspectRatio="none"><defs><radialGradient id="ck1" cx="0.5" cy="0.4" r="0.7"><stop offset="0" stop-color="#ffffff"/><stop offset="1" stop-color="#d3e6fb"/></radialGradient></defs><circle cx="11" cy="11" r="9.400" fill="url(#ck1)" stroke="#2f5fc4" stroke-width="2.200"/><path d="M11 11 L15 5.500" stroke="#4a6fc0" stroke-width="1.200"/><path d="M11 11 L12.500 16.500" stroke="#e0703a" stroke-width="1"/><path d="M11 11 L7.500 9.500" stroke="#e0703a" stroke-width="1"/></svg></div>
<div style="position:absolute;left:62px;top:258px;width:332px;height:598px;border:1px solid #c2c2c2;background:#fff;box-sizing:border-box"></div>
<div style="position:absolute;left:62px;top:258px;width:329px;height:34px;border:1px solid #c2c2c2;border-top:2px solid #b9b9b9;border-left:2px solid #b9b9b9;background:#f5f5f5;box-sizing:border-box"></div>
<div style="position:absolute;left:240px;top:259px;width:1px;height:32px;background:#c2c2c2"></div>
<div style="position:absolute;left:66px;top:268px;height:18px;line-height:18px;font-family:'DejaVu Sans Condensed','Liberation Sans',sans-serif;font-size:13.3px;color:#303030;white-space:nowrap;letter-spacing:0.074px;">Сотрудник</div>
<div style="position:absolute;left:244.3px;top:268px;height:18px;line-height:18px;font-family:'DejaVu Sans Condensed','Liberation Sans',sans-serif;font-size:13.3px;color:#303030;white-space:nowrap;letter-spacing:-0.168px;">Специализация</div>
<div style="position:absolute;left:79px;top:323px;width:0;height:64px;border-left:1px dotted #b8b8b8"></div>
<div style="position:absolute;left:88px;top:313px;width:8px;height:0;border-top:1px dotted #b8b8b8"></div>
<div style="position:absolute;left:88px;top:394px;width:8px;height:0;border-top:1px dotted #b8b8b8"></div>
<div style="position:absolute;left:112px;top:324px;width:17px;height:30px;border-left:1px dotted #b8b8b8;border-bottom:1px dotted #b8b8b8"></div>
<div style="position:absolute;left:112px;top:405px;width:17px;height:30px;border-left:1px dotted #b8b8b8;border-bottom:1px dotted #b8b8b8"></div>
<div style="position:absolute;left:70px;top:305.8px;width:18px;height:18px"><svg viewBox="0 0 18 18" preserveAspectRatio="none"><circle cx="9" cy="9" r="7.700" fill="#f7fafc" stroke="#454545" stroke-width="1.150"/><path d="M6 6 L11.300 11.300 M11.700 7.200 V11.700 H7.200" fill="none" stroke="#454545" stroke-width="1.300"/></svg></div>
<div style="position:absolute;left:102px;top:307.5px;width:21px;height:13.8px"><svg viewBox="0 0 21 16" preserveAspectRatio="none"><path d="M0.500 15 V2 Q0.500 0.500 2 0.500 H7 Q8 0.500 8.500 1.500 L9.500 3 H15.500 Q17 3 17 4.500 V8 H5 Z" fill="#7d7d7d"/><path d="M0.500 15.500 L4.200 7.500 Q4.600 6.500 5.800 6.500 H19.500 Q20.800 6.500 20.300 7.800 L17.300 14.500 Q16.800 15.500 15.600 15.500 Z" fill="#fbc25f"/></svg></div>
<div style="position:absolute;left:131.5px;top:307.3px;height:17px;line-height:17px;font-family:'DejaVu Sans Condensed','Liberation Sans',sans-serif;font-size:13.3px;color:#202020;white-space:nowrap;letter-spacing:-0.066px;">Ветеринар</div>
<div style="position:absolute;left:137px;top:345.6px;width:18.2px;height:18.6px"><svg viewBox="0 0 18.2 18.6" preserveAspectRatio="none"><defs><linearGradient id="ub" x1="0" y1="0" x2="0" y2="1"><stop offset="0" stop-color="#9ad24a"/><stop offset="0.55" stop-color="#86c43a"/><stop offset="1" stop-color="#5f9f1e"/></linearGradient><linearGradient id="uf" x1="0" y1="0" x2="0" y2="1"><stop offset="0" stop-color="#fbe6c4"/><stop offset="0.6" stop-color="#f2c49a"/><stop offset="1" stop-color="#d98a62"/></linearGradient><linearGradient id="uh" x1="0" y1="0" x2="0" y2="1"><stop offset="0" stop-color="#d99a62"/><stop offset="0.35" stop-color="#c98048"/><stop offset="1" stop-color="#a86430"/></linearGradient></defs><g transform="translate(0.00 0.00) scale(1.000)"><path d="M0.3 15 Q0.3 12.200 5 11.600 Q9.100 10.900 13.200 11.600 Q17.900 12.200 17.900 15 Q17.900 18.300 9.100 18.300 Q0.300 18.300 0.300 15 Z" fill="url(#ub)" stroke="#6aa030" stroke-width="0.4" stroke-opacity="0.7"/><ellipse cx="9.1" cy="13.600" rx="5.800" ry="1.700" fill="#b4e070" opacity="0.55"/><ellipse cx="9.200" cy="8.500" rx="2.900" ry="4.900" fill="url(#uf)"/><path d="M3.900 6 Q3.500 0.400 9.100 0.400 Q14.700 0.400 14.300 6 Q14.400 8.600 13.100 9.600 L11.900 9.400 Q12.300 6.200 11.500 4.700 Q9 3.500 6.900 4.700 Q6.100 6.200 6.500 9.400 L5.300 9.600 Q3.800 8.600 3.900 6 Z" fill="url(#uh)"/></g></svg></div>
<div style="position:absolute;left:165px;top:340px;height:16px;line-height:16px;font-family:'DejaVu Sans Condensed','Liberation Sans',sans-serif;font-size:13.3px;color:#202020;white-space:nowrap;height:32px;">Ветеринар<br>1</div>
<div style="position:absolute;left:244px;top:347px;height:17px;line-height:17px;font-family:'DejaVu Sans Condensed','Liberation Sans',sans-serif;font-size:13.3px;color:#202020;white-space:nowrap;">Ветеринар</div>
<div style="position:absolute;left:70px;top:386.6px;width:18px;height:18px"><svg viewBox="0 0 18 18" preserveAspectRatio="none"><circle cx="9" cy="9" r="7.700" fill="#f7fafc" stroke="#454545" stroke-width="1.150"/><path d="M6 6 L11.300 11.300 M11.700 7.200 V11.700 H7.200" fill="none" stroke="#454545" stroke-width="1.300"/></svg></div>
<div style="position:absolute;left:102px;top:388.5px;width:21px;height:13.8px"><svg viewBox="0 0 21 16" preserveAspectRatio="none"><path d="M0.500 15 V2 Q0.500 0.500 2 0.500 H7 Q8 0.500 8.500 1.500 L9.500 3 H15.500 Q17 3 17 4.500 V8 H5 Z" fill="#7d7d7d"/><path d="M0.500 15.500 L4.200 7.500 Q4.600 6.500 5.800 6.500 H19.500 Q20.800 6.500 20.300 7.800 L17.300 14.500 Q16.800 15.500 15.600 15.500 Z" fill="#fbc25f"/></svg></div>
<div style="position:absolute;left:131.5px;top:388.2px;height:17px;line-height:17px;font-family:'DejaVu Sans Condensed','Liberation Sans',sans-serif;font-size:13.3px;color:#202020;white-space:nowrap;">Лаборатория</div>
<div style="position:absolute;left:137px;top:426.6px;width:18.2px;height:18.6px"><svg viewBox="0 0 18.2 18.6" preserveAspectRatio="none"><defs><linearGradient id="ub" x1="0" y1="0" x2="0" y2="1"><stop offset="0" stop-color="#9ad24a"/><stop offset="0.55" stop-color="#86c43a"/><stop offset="1" stop-color="#5f9f1e"/></linearGradient><linearGradient id="uf" x1="0" y1="0" x2="0" y2="1"><stop offset="0" stop-color="#fbe6c4"/><stop offset="0.6" stop-color="#f2c49a"/><stop offset="1" stop-color="#d98a62"/></linearGradient><linearGradient id="uh" x1="0" y1="0" x2="0" y2="1"><stop offset="0" stop-color="#d99a62"/><stop offset="0.35" stop-color="#c98048"/><stop offset="1" stop-color="#a86430"/></linearGradient></defs><g transform="translate(0.00 0.00) scale(1.000)"><path d="M0.3 15 Q0.3 12.200 5 11.600 Q9.100 10.900 13.200 11.600 Q17.900 12.200 17.900 15 Q17.900 18.300 9.100 18.300 Q0.300 18.300 0.300 15 Z" fill="url(#ub)" stroke="#6aa030" stroke-width="0.4" stroke-opacity="0.7"/><ellipse cx="9.1" cy="13.600" rx="5.800" ry="1.700" fill="#b4e070" opacity="0.55"/><ellipse cx="9.200" cy="8.500" rx="2.900" ry="4.900" fill="url(#uf)"/><path d="M3.900 6 Q3.500 0.400 9.100 0.400 Q14.700 0.400 14.300 6 Q14.400 8.600 13.100 9.600 L11.900 9.400 Q12.300 6.200 11.500 4.700 Q9 3.500 6.900 4.700 Q6.100 6.200 6.500 9.400 L5.300 9.600 Q3.800 8.600 3.900 6 Z" fill="url(#uh)"/></g></svg></div>
<div style="position:absolute;left:165px;top:421px;height:16px;line-height:16px;font-family:'DejaVu Sans Condensed','Liberation Sans',sans-serif;font-size:13.3px;color:#202020;white-space:nowrap;height:32px;">Ветеринар<br>4</div>
<div style="position:absolute;left:244px;top:428px;height:17px;line-height:17px;font-family:'DejaVu Sans Condensed','Liberation Sans',sans-serif;font-size:13.3px;color:#202020;white-space:nowrap;">Ветеринар</div>
<div style="position:absolute;left:407px;top:166px;width:358px;height:665px;border:1px solid #bdbdbd;background:#fff;box-sizing:border-box"></div>
<div style="position:absolute;left:408px;top:167px;width:337px;height:66px;background:#f6f6f6"></div>
<div style="position:absolute;left:408px;top:166px;width:337px;height:2px;background:#c4c4c4"></div>
<div style="position:absolute;left:407px;top:166px;width:2px;height:665px;background:#bcbcbc"></div>
<div style="position:absolute;left:408px;top:199px;width:337px;height:1px;background:#c4c4c4"></div>
<div style="position:absolute;left:408px;top:232px;width:337px;height:1px;background:#c4c4c4"></div>
<div style="position:absolute;left:744px;top:166px;width:1px;height:665px;background:#c4c4c4"></div>
<div style="position:absolute;left:539px;top:200px;width:1px;height:32px;background:#c4c4c4"></div>
<div style="position:absolute;left:589px;top:200px;width:1px;height:32px;background:#c4c4c4"></div>
<div style="position:absolute;left:643px;top:200px;width:1px;height:32px;background:#c4c4c4"></div>
<div style="position:absolute;left:500.8px;top:175.5px;height:18px;line-height:18px;font-family:'DejaVu Sans Condensed','Liberation Sans',sans-serif;font-size:13.3px;color:#303030;white-space:nowrap;letter-spacing:-0.031px;">1. Ветеринар 1 (Ветеринар)</div>
<div style="position:absolute;left:444.7px;top:210px;height:18px;line-height:18px;font-family:'DejaVu Sans Condensed','Liberation Sans',sans-serif;font-size:13.3px;color:#303030;white-space:nowrap;letter-spacing:0.005px;">Дата</div>
<div style="position:absolute;left:518px;top:216px;width:0;height:0;border-left:5px solid transparent;border-right:5px solid transparent;border-bottom:5px solid #666"></div>
<div style="position:absolute;left:545px;top:210px;height:18px;line-height:18px;font-family:'DejaVu Sans Condensed','Liberation Sans',sans-serif;font-size:13.3px;color:#303030;white-space:nowrap;letter-spacing:-0.473px;">Время</div>
<div style="position:absolute;left:611.5px;top:210px;height:18px;line-height:18px;font-family:'DejaVu Sans Condensed','Liberation Sans',sans-serif;font-size:13.3px;color:#303030;white-space:nowrap;">#</div>
<div style="position:absolute;left:677.5px;top:210px;height:18px;line-height:18px;font-family:'DejaVu Sans Condensed','Liberation Sans',sans-serif;font-size:13.3px;color:#303030;white-space:nowrap;letter-spacing:-0.234px;">Пациент</div>
<div style="position:absolute;left:409px;top:234px;width:335px;height:20px;background:#dbf0fd"></div>
<div style="position:absolute;left:441px;top:234px;width:303px;height:20px;background:#0080c2"></div>
<div style="position:absolute;left:415px;top:234.4px;width:18px;height:18px"><svg viewBox="0 0 18 18" preserveAspectRatio="none"><circle cx="9" cy="9" r="7.700" fill="#f7fafc" stroke="#454545" stroke-width="1.150"/><path d="M6 6 L11.300 11.300 M11.700 7.200 V11.700 H7.200" fill="none" stroke="#454545" stroke-width="1.300"/></svg></div>
<div style="position:absolute;left:441.5px;top:235px;height:18px;line-height:18px;font-family:'DejaVu Sans Condensed','Liberation Sans',sans-serif;font-size:13.3px;color:#00e6ff;white-space:nowrap;letter-spacing:0.057px;">03.09.2024</div>
<div style="position:absolute;left:643px;top:235px;height:18px;line-height:18px;font-family:'DejaVu Sans Condensed','Liberation Sans',sans-serif;font-size:13.3px;color:#00e6ff;white-space:nowrap;">Вторник</div>
<div style="position:absolute;left:409px;top:254px;width:335px;height:20px;background:#ddfae3;overflow:hidden"></div>
<div style="position:absolute;left:540.5px;top:255px;height:18px;line-height:18px;overflow:hidden;font-family:'DejaVu Sans Condensed','Liberation Sans',sans-serif;font-size:13.3px;color:#3a3a48;white-space:nowrap">09:00</div>
<div style="position:absolute;left:409px;top:274px;width:335px;height:20px;background:#dbf0fd;overflow:hidden"></div>
<div style="position:absolute;left:540.5px;top:275px;height:18px;line-height:18px;overflow:hidden;font-family:'DejaVu Sans Condensed','Liberation Sans',sans-serif;font-size:13.3px;color:#3a3a48;white-space:nowrap">09:30</div>
<div style="position:absolute;left:409px;top:294px;width:335px;height:20px;background:#ddfae3;overflow:hidden"></div>
<div style="position:absolute;left:540.5px;top:295px;height:18px;line-height:18px;overflow:hidden;font-family:'DejaVu Sans Condensed','Liberation Sans',sans-serif;font-size:13.3px;color:#3a3a48;white-space:nowrap">10:00</div>
<div style="position:absolute;left:409px;top:314px;width:335px;height:20px;background:#dbf0fd;overflow:hidden"></div>
<div style="position:absolute;left:540.5px;top:315px;height:18px;line-height:18px;overflow:hidden;font-family:'DejaVu Sans Condensed','Liberation Sans',sans-serif;font-size:13.3px;color:#3a3a48;white-space:nowrap">10:30</div>
<div style="position:absolute;left:409px;top:334px;width:335px;height:20px;background:#ddfae3;overflow:hidden"></div>
<div style="position:absolute;left:540.5px;top:335px;height:18px;line-height:18px;overflow:hidden;font-family:'DejaVu Sans Condensed','Liberation Sans',sans-serif;font-size:13.3px;color:#3a3a48;white-space:nowrap">11:00</div>
<div style="position:absolute;left:409px;top:354px;width:335px;height:20px;background:#dbf0fd;overflow:hidden"></div>
<div style="position:absolute;left:540px;top:354px;width:204px;height:20px;background:#fffbc0"></div>
<div style="position:absolute;left:589.5px;top:355px;width:154px;height:18px;line-height:18px;overflow:hidden;font-family:'DejaVu Sans Condensed','Liberation Sans',sans-serif;font-size:13.3px;color:#383838;white-space:nowrap"><span style="display:inline-block;width:53.5px">000081</span>Клиент 2 - Опре</div>
<div style="position:absolute;left:519.9px;top:358.4px;width:9.5px;height:9.4px"><svg viewBox="0 0 9.5 9.4" preserveAspectRatio="none"><path d="M0.300 4.600 L1.900 3.300 L3.600 5.500 L8.400 0.300 L9.400 1 L9 2.500 L4.200 9.200 L3.200 9.200 Z" fill="#0a0a0a"/></svg></div>
<div style="position:absolute;left:540.5px;top:355px;height:18px;line-height:18px;overflow:hidden;font-family:'DejaVu Sans Condensed','Liberation Sans',sans-serif;font-size:13.3px;color:#383838;white-space:nowrap">11:30</div>
<div style="position:absolute;left:409px;top:374px;width:335px;height:20px;background:#ddfae3;overflow:hidden"></div>
<div style="position:absolute;left:540.5px;top:375px;height:18px;line-height:18px;overflow:hidden;font-family:'DejaVu Sans Condensed','Liberation Sans',sans-serif;font-size:13.3px;color:#3a3a48;white-space:nowrap">12:00</div>
<div style="position:absolute;left:409px;top:394px;width:335px;height:20px;background:#dbf0fd;overflow:hidden"></div>
<div style="position:absolute;left:540px;top:394px;width:204px;height:20px;background:#fffbc0"></div>
<div style="position:absolute;left:589.5px;top:395px;width:154px;height:18px;line-height:18px;overflow:hidden;font-family:'DejaVu Sans Condensed','Liberation Sans',sans-serif;font-size:13.3px;color:#383838;white-space:nowrap"><span style="display:inline-block;width:53.5px">000084</span>Клиент 5 - Опре</div>
<div style="position:absolute;left:519.9px;top:398.4px;width:9.5px;height:9.4px"><svg viewBox="0 0 9.5 9.4" preserveAspectRatio="none"><path d="M0.300 4.600 L1.900 3.300 L3.600 5.500 L8.400 0.300 L9.400 1 L9 2.500 L4.200 9.200 L3.200 9.200 Z" fill="#0a0a0a"/></svg></div>
<div style="position:absolute;left:540.5px;top:395px;height:18px;line-height:18px;overflow:hidden;font-family:'DejaVu Sans Condensed','Liberation Sans',sans-serif;font-size:13.3px;color:#383838;white-space:nowrap">12:30</div>
<div style="position:absolute;left:409px;top:414px;width:335px;height:20px;background:#ddfae3;overflow:hidden"></div>
<div style="position:absolute;left:540.5px;top:415px;height:18px;line-height:18px;overflow:hidden;font-family:'DejaVu Sans Condensed','Liberation Sans',sans-serif;font-size:13.3px;color:#3a3a48;white-space:nowrap">13:00</div>
<div style="position:absolute;left:409px;top:434px;width:335px;height:20px;background:#dbf0fd;overflow:hidden"></div>
<div style="position:absolute;left:540.5px;top:435px;height:18px;line-height:18px;overflow:hidden;font-family:'DejaVu Sans Condensed','Liberation Sans',sans-serif;font-size:13.3px;color:#3a3a48;white-space:nowrap">13:30</div>
<div style="position:absolute;left:409px;top:454px;width:335px;height:20px;background:#ddfae3;overflow:hidden"></div>
<div style="position:absolute;left:540.5px;top:455px;height:18px;line-height:18px;overflow:hidden;font-family:'DejaVu Sans Condensed','Liberation Sans',sans-serif;font-size:13.3px;color:#3a3a48;white-space:nowrap">14:00</div>
<div style="position:absolute;left:409px;top:474px;width:335px;height:20px;background:#dbf0fd;overflow:hidden"></div>
<div style="position:absolute;left:540.5px;top:475px;height:18px;line-height:18px;overflow:hidden;font-family:'DejaVu Sans Condensed','Liberation Sans',sans-serif;font-size:13.3px;color:#3a3a48;white-space:nowrap">14:30</div>
<div style="position:absolute;left:409px;top:494px;width:335px;height:20px;background:#ddfae3;overflow:hidden"></div>
<div style="position:absolute;left:540.5px;top:495px;height:18px;line-height:18px;overflow:hidden;font-family:'DejaVu Sans Condensed','Liberation Sans',sans-serif;font-size:13.3px;color:#3a3a48;white-space:nowrap">15:00</div>
<div style="position:absolute;left:409px;top:514px;width:335px;height:20px;background:#dbf0fd;overflow:hidden"></div>
<div style="position:absolute;left:540.5px;top:515px;height:18px;line-height:18px;overflow:hidden;font-family:'DejaVu Sans Condensed','Liberation Sans',sans-serif;font-size:13.3px;color:#3a3a48;white-space:nowrap">15:30</div>
<div style="position:absolute;left:409px;top:534px;width:335px;height:20px;background:#ddfae3;overflow:hidden"></div>
<div style="position:absolute;left:540.5px;top:535px;height:18px;line-height:18px;overflow:hidden;font-family:'DejaVu Sans Condensed','Liberation Sans',sans-serif;font-size:13.3px;color:#3a3a48;white-space:nowrap">16:00</div>
<div style="position:absolute;left:409px;top:554px;width:335px;height:20px;background:#dbf0fd;overflow:hidden"></div>
<div style="position:absolute;left:540.5px;top:555px;height:18px;line-height:18px;overflow:hidden;font-family:'DejaVu Sans Condensed','Liberation Sans',sans-serif;font-size:13.3px;color:#3a3a48;white-space:nowrap">16:30</div>
<div style="position:absolute;left:409px;top:574px;width:335px;height:20px;background:#ddfae3;overflow:hidden"></div>
<div style="position:absolute;left:540.5px;top:575px;height:18px;line-height:18px;overflow:hidden;font-family:'DejaVu Sans Condensed','Liberation Sans',sans-serif;font-size:13.3px;color:#3a3a48;white-space:nowrap">17:00</div>
<div style="position:absolute;left:409px;top:594px;width:335px;height:20px;background:#dbf0fd;overflow:hidden"></div>
<div style="position:absolute;left:540.5px;top:595px;height:18px;line-height:18px;overflow:hidden;font-family:'DejaVu Sans Condensed','Liberation Sans',sans-serif;font-size:13.3px;color:#3a3a48;white-space:nowrap">17:30</div>
<div style="position:absolute;left:409px;top:614px;width:335px;height:20px;background:#dbf0fd"></div>
<div style="position:absolute;left:441px;top:614px;width:303px;height:20px;background:#0080c2"></div>
<div style="position:absolute;left:415px;top:614.4px;width:18px;height:18px"><svg viewBox="0 0 18 18" preserveAspectRatio="none"><circle cx="9" cy="9" r="7.700" fill="#f7fafc" stroke="#454545" stroke-width="1.150"/><path d="M6 6 L11.300 11.300 M11.700 7.200 V11.700 H7.200" fill="none" stroke="#454545" stroke-width="1.300"/></svg></div>
<div style="position:absolute;left:441.5px;top:615px;height:18px;line-height:18px;font-family:'DejaVu Sans Condensed','Liberation Sans',sans-serif;font-size:13.3px;color:#ffffff;white-space:nowrap;letter-spacing:0.057px;">04.09.2024</div>
<div style="position:absolute;left:643px;top:615px;height:18px;line-height:18px;font-family:'DejaVu Sans Condensed','Liberation Sans',sans-serif;font-size:13.3px;color:#ffffff;white-space:nowrap;">Среда</div>
<div style="position:absolute;left:409px;top:634px;width:335px;height:20px;background:#dbf0fd;overflow:hidden"></div>
<div style="position:absolute;left:540.5px;top:635px;height:18px;line-height:18px;overflow:hidden;font-family:'DejaVu Sans Condensed','Liberation Sans',sans-serif;font-size:13.3px;color:#3a3a48;white-space:nowrap">09:00</div>
<div style="position:absolute;left:409px;top:654px;width:335px;height:20px;background:#ddfae3;overflow:hidden"></div>
<div style="position:absolute;left:540.5px;top:655px;height:18px;line-height:18px;overflow:hidden;font-family:'DejaVu Sans Condensed','Liberation Sans',sans-serif;font-size:13.3px;color:#3a3a48;white-space:nowrap">09:30</div>
<div style="position:absolute;left:409px;top:674px;width:335px;height:20px;background:#dbf0fd;overflow:hidden"></div>
<div style="position:absolute;left:540.5px;top:675px;height:18px;line-height:18px;overflow:hidden;font-family:'DejaVu Sans Condensed','Liberation Sans',sans-serif;font-size:13.3px;color:#3a3a48;white-space:nowrap">10:00</div>
<div style="position:absolute;left:409px;top:694px;width:335px;height:20px;background:#ddfae3;overflow:hidden"></div>
<div style="position:absolute;left:540.5px;top:695px;height:18px;line-height:18px;overflow:hidden;font-family:'DejaVu Sans Condensed','Liberation Sans',sans-serif;font-size:13.3px;color:#3a3a48;white-space:nowrap">10:30</div>
<div style="position:absolute;left:409px;top:714px;width:335px;height:20px;background:#dbf0fd;overflow:hidden"></div>
<div style="position:absolute;left:540.5px;top:715px;height:18px;line-height:18px;overflow:hidden;font-family:'DejaVu Sans Condensed','Liberation Sans',sans-serif;font-size:13.3px;color:#3a3a48;white-space:nowrap">11:00</div>
<div style="position:absolute;left:409px;top:734px;width:335px;height:20px;background:#ddfae3;overflow:hidden"></div>
<div style="position:absolute;left:540.5px;top:735px;height:18px;line-height:18px;overflow:hidden;font-family:'DejaVu Sans Condensed','Liberation Sans',sans-serif;font-size:13.3px;color:#3a3a48;white-space:nowrap">11:30</div>
<div style="position:absolute;left:409px;top:754px;width:335px;height:20px;background:#dbf0fd;overflow:hidden"></div>
<div style="position:absolute;left:540px;top:754px;width:204px;height:20px;background:#fffbc0"></div>
<div style="position:absolute;left:589.5px;top:755px;width:154px;height:18px;line-height:18px;overflow:hidden;font-family:'DejaVu Sans Condensed','Liberation Sans',sans-serif;font-size:13.3px;color:#c00000;white-space:nowrap"><span style="display:inline-block;width:53.5px">000085</span>Клиент 6 - Опре</div>
<div style="position:absolute;left:475.8px;top:754.5px;width:18.6px;height:18.6px"><svg viewBox="0 0 18.6 18.6" preserveAspectRatio="none"><path d="M0.400 3.200 Q0.300 13.500 11.800 18.200 Q14.600 18.700 15.300 15.800 Q7.800 11.800 6 3.400 Q3 0.800 0.400 3.200 Z" fill="#050505"/><ellipse cx="5.200" cy="2.900" rx="3.300" ry="1.900" transform="rotate(42 5.200 2.900)" fill="#ff3a1c"/><ellipse cx="15.500" cy="13.600" rx="3.300" ry="1.900" transform="rotate(48 15.500 13.600)" fill="#ff3a1c"/></svg></div>
<div style="position:absolute;left:540.5px;top:755px;height:18px;line-height:18px;overflow:hidden;font-family:'DejaVu Sans Condensed','Liberation Sans',sans-serif;font-size:13.3px;color:#c00000;white-space:nowrap">12:00</div>
<div style="position:absolute;left:409px;top:774px;width:335px;height:20px;background:#ddfae3;overflow:hidden"></div>
<div style="position:absolute;left:540.5px;top:775px;height:18px;line-height:18px;overflow:hidden;font-family:'DejaVu Sans Condensed','Liberation Sans',sans-serif;font-size:13.3px;color:#3a3a48;white-space:nowrap">12:30</div>
<div style="position:absolute;left:409px;top:794px;width:335px;height:20px;background:#dbf0fd;overflow:hidden"></div>
<div style="position:absolute;left:540.5px;top:795px;height:18px;line-height:18px;overflow:hidden;font-family:'DejaVu Sans Condensed','Liberation Sans',sans-serif;font-size:13.3px;color:#3a3a48;white-space:nowrap">13:00</div>
<div style="position:absolute;left:409px;top:814px;width:335px;height:16px;background:#ddfae3;overflow:hidden"></div>
<div style="position:absolute;left:540.5px;top:815px;height:15px;line-height:18px;overflow:hidden;font-family:'DejaVu Sans Condensed','Liberation Sans',sans-serif;font-size:13.3px;color:#3a3a48;white-space:nowrap">13:30</div>
<div style="position:absolute;left:746px;top:167px;width:18px;height:663px;background:#fff"></div>
<div style="position:absolute;left:750px;top:188px;width:10px;height:488px;background:#b9b9b9"></div>
<div style="position:absolute;left:751px;top:175px;width:0;height:0;border-left:4px solid transparent;border-right:4px solid transparent;border-bottom:4px solid #7a7a7a"></div>
<div style="position:absolute;left:751px;top:817px;width:0;height:0;border-left:4px solid transparent;border-right:4px solid transparent;border-top:4px solid #7a7a7a"></div>
<div style="position:absolute;left:774px;top:166px;width:358px;height:665px;border:1px solid #bdbdbd;background:#fff;box-sizing:border-box"></div>
<div style="position:absolute;left:775px;top:167px;width:337px;height:66px;background:#f6f6f6"></div>
<div style="position:absolute;left:775px;top:166px;width:337px;height:2px;background:#c4c4c4"></div>
<div style="position:absolute;left:774px;top:166px;width:2px;height:665px;background:#bcbcbc"></div>
<div style="position:absolute;left:775px;top:199px;width:337px;height:1px;background:#c4c4c4"></div>
<div style="position:absolute;left:775px;top:232px;width:337px;height:1px;background:#c4c4c4"></div>
<div style="position:absolute;left:1111px;top:166px;width:1px;height:665px;background:#c4c4c4"></div>
<div style="position:absolute;left:906px;top:200px;width:1px;height:32px;background:#c4c4c4"></div>
<div style="position:absolute;left:956px;top:200px;width:1px;height:32px;background:#c4c4c4"></div>
<div style="position:absolute;left:1010px;top:200px;width:1px;height:32px;background:#c4c4c4"></div>
<div style="position:absolute;left:859.5px;top:175.5px;height:18px;line-height:18px;font-family:'DejaVu Sans Condensed','Liberation Sans',sans-serif;font-size:13.3px;color:#303030;white-space:nowrap;letter-spacing:0.027px;">2. Ветеринар 4 (Лаборатория)</div>
<div style="position:absolute;left:811.7px;top:210px;height:18px;line-height:18px;font-family:'DejaVu Sans Condensed','Liberation Sans',sans-serif;font-size:13.3px;color:#303030;white-space:nowrap;letter-spacing:0.005px;">Дата</div>
<div style="position:absolute;left:885px;top:216px;width:0;height:0;border-left:5px solid transparent;border-right:5px solid transparent;border-bottom:5px solid #666"></div>
<div style="position:absolute;left:912px;top:210px;height:18px;line-height:18px;font-family:'DejaVu Sans Condensed','Liberation Sans',sans-serif;font-size:13.3px;color:#303030;white-space:nowrap;letter-spacing:-0.473px;">Время</div>
<div style="position:absolute;left:978.5px;top:210px;height:18px;line-height:18px;font-family:'DejaVu Sans Condensed','Liberation Sans',sans-serif;font-size:13.3px;color:#303030;white-space:nowrap;">#</div>
<div style="position:absolute;left:1044.5px;top:210px;height:18px;line-height:18px;font-family:'DejaVu Sans Condensed','Liberation Sans',sans-serif;font-size:13.3px;color:#303030;white-space:nowrap;letter-spacing:-0.234px;">Пациент</div>
<div style="position:absolute;left:776px;top:234px;width:335px;height:20px;background:#dbf0fd"></div>
<div style="position:absolute;left:808px;top:234px;width:303px;height:20px;background:#0080c2"></div>
<div style="position:absolute;left:782px;top:234.4px;width:18px;height:18px"><svg viewBox="0 0 18 18" preserveAspectRatio="none"><circle cx="9" cy="9" r="7.700" fill="#f7fafc" stroke="#454545" stroke-width="1.150"/><path d="M6 6 L11.300 11.300 M11.700 7.200 V11.700 H7.200" fill="none" stroke="#454545" stroke-width="1.300"/></svg></div>
<div style="position:absolute;left:808.5px;top:235px;height:18px;line-height:18px;font-family:'DejaVu Sans Condensed','Liberation Sans',sans-serif;font-size:13.3px;color:#00e6ff;white-space:nowrap;letter-spacing:0.057px;">03.09.2024</div>
<div style="position:absolute;left:1010px;top:235px;height:18px;line-height:18px;font-family:'DejaVu Sans Condensed','Liberation Sans',sans-serif;font-size:13.3px;color:#00e6ff;white-space:nowrap;">Вторник</div>
<div style="position:absolute;left:776px;top:254px;width:335px;height:20px;background:#ddfae3;overflow:hidden"></div>
<div style="position:absolute;left:907.5px;top:255px;height:18px;line-height:18px;overflow:hidden;font-family:'DejaVu Sans Condensed','Liberation Sans',sans-serif;font-size:13.3px;color:#3a3a48;white-space:nowrap">09:00</div>
<div style="position:absolute;left:776px;top:274px;width:335px;height:20px;background:#dbf0fd;overflow:hidden"></div>
<div style="position:absolute;left:907.5px;top:275px;height:18px;line-height:18px;overflow:hidden;font-family:'DejaVu Sans Condensed','Liberation Sans',sans-serif;font-size:13.3px;color:#3a3a48;white-space:nowrap">09:30</div>
<div style="position:absolute;left:776px;top:294px;width:335px;height:20px;background:#ddfae3;overflow:hidden"></div>
<div style="position:absolute;left:907px;top:294px;width:204px;height:20px;background:#fffbc0"></div>
<div style="position:absolute;left:956.5px;top:295px;width:154px;height:18px;line-height:18px;overflow:hidden;font-family:'DejaVu Sans Condensed','Liberation Sans',sans-serif;font-size:13.3px;color:#383838;white-space:nowrap"><span style="display:inline-block;width:53.5px">000080</span>Клиент 1 - Опре</div>
<div style="position:absolute;left:886.9px;top:298.4px;width:9.5px;height:9.4px"><svg viewBox="0 0 9.5 9.4" preserveAspectRatio="none"><path d="M0.300 4.600 L1.900 3.300 L3.600 5.500 L8.400 0.300 L9.400 1 L9 2.500 L4.200 9.200 L3.200 9.200 Z" fill="#0a0a0a"/></svg></div>
<div style="position:absolute;left:867.1px;top:297.4px;width:12px;height:11.5px"><svg viewBox="0 0 12 11.5" preserveAspectRatio="none"><path d="M6 5.750 L10.17 1.79" stroke="#ffa31a" stroke-width="2.500" stroke-linecap="round"/><path d="M6 5.750 L10.17 9.71" stroke="#ffa31a" stroke-width="2.500" stroke-linecap="round"/><path d="M6 5.750 L1.83 9.71" stroke="#ffa31a" stroke-width="2.500" stroke-linecap="round"/><path d="M6 5.750 L1.83 1.79" stroke="#ffa31a" stroke-width="2.500" stroke-linecap="round"/><path d="M6 5.750 L6.00 0.25" stroke="#ffb020" stroke-width="1.600"/><path d="M6 5.750 L11.70 5.75" stroke="#ffb020" stroke-width="1.600"/><path d="M6 5.750 L6.00 11.25" stroke="#ffb020" stroke-width="1.600"/><path d="M6 5.750 L0.30 5.75" stroke="#ffb020" stroke-width="1.600"/><circle cx="6" cy="5.750" r="2.700" fill="#ffdd33"/><circle cx="6" cy="5.750" r="1.200" fill="#fff27a"/></svg></div>
<div style="position:absolute;left:907.5px;top:295px;height:18px;line-height:18px;overflow:hidden;font-family:'DejaVu Sans Condensed','Liberation Sans',sans-serif;font-size:13.3px;color:#383838;white-space:nowrap">10:00</div>
<div style="position:absolute;left:776px;top:314px;width:335px;height:20px;background:#dbf0fd;overflow:hidden"></div>
<div style="position:absolute;left:907.5px;top:315px;height:18px;line-height:18px;overflow:hidden;font-family:'DejaVu Sans Condensed','Liberation Sans',sans-serif;font-size:13.3px;color:#3a3a48;white-space:nowrap">10:30</div>
<div style="position:absolute;left:776px;top:334px;width:335px;height:20px;background:#ddfae3;overflow:hidden"></div>
<div style="position:absolute;left:907.5px;top:335px;height:18px;line-height:18px;overflow:hidden;font-family:'DejaVu Sans Condensed','Liberation Sans',sans-serif;font-size:13.3px;color:#3a3a48;white-space:nowrap">11:00</div>
<div style="position:absolute;left:776px;top:354px;width:335px;height:20px;background:#dbf0fd;overflow:hidden"></div>
<div style="position:absolute;left:907.5px;top:355px;height:18px;line-height:18px;overflow:hidden;font-family:'DejaVu Sans Condensed','Liberation Sans',sans-serif;font-size:13.3px;color:#3a3a48;white-space:nowrap">11:30</div>
<div style="position:absolute;left:776px;top:374px;width:335px;height:20px;background:#ddfae3;overflow:hidden"></div>
<div style="position:absolute;left:907.5px;top:375px;height:18px;line-height:18px;overflow:hidden;font-family:'DejaVu Sans Condensed','Liberation Sans',sans-serif;font-size:13.3px;color:#3a3a48;white-space:nowrap">12:00</div>
<div style="position:absolute;left:776px;top:394px;width:335px;height:20px;background:#dbf0fd;overflow:hidden"></div>
<div style="position:absolute;left:907.5px;top:395px;height:18px;line-height:18px;overflow:hidden;font-family:'DejaVu Sans Condensed','Liberation Sans',sans-serif;font-size:13.3px;color:#3a3a48;white-space:nowrap">12:30</div>
<div style="position:absolute;left:776px;top:414px;width:335px;height:20px;background:#ddfae3;overflow:hidden"></div>
<div style="position:absolute;left:907.5px;top:415px;height:18px;line-height:18px;overflow:hidden;font-family:'DejaVu Sans Condensed','Liberation Sans',sans-serif;font-size:13.3px;color:#3a3a48;white-space:nowrap">13:00</div>
<div style="position:absolute;left:776px;top:434px;width:335px;height:20px;background:#dbf0fd;overflow:hidden"></div>
<div style="position:absolute;left:907.5px;top:435px;height:18px;line-height:18px;overflow:hidden;font-family:'DejaVu Sans Condensed','Liberation Sans',sans-serif;font-size:13.3px;color:#3a3a48;white-space:nowrap">13:30</div>
<div style="position:absolute;left:776px;top:454px;width:335px;height:20px;background:#ddfae3;overflow:hidden"></div>
<div style="position:absolute;left:907px;top:454px;width:204px;height:20px;background:#fffbc0"></div>
<div style="position:absolute;left:956.5px;top:455px;width:154px;height:18px;line-height:18px;overflow:hidden;font-family:'DejaVu Sans Condensed','Liberation Sans',sans-serif;font-size:13.3px;color:#383838;white-space:nowrap"><span style="display:inline-block;width:53.5px">000082</span>Клиент 3 - Опре</div>
<div style="position:absolute;left:886.9px;top:458.4px;width:9.5px;height:9.4px"><svg viewBox="0 0 9.5 9.4" preserveAspectRatio="none"><path d="M0.300 4.600 L1.900 3.300 L3.600 5.500 L8.400 0.300 L9.400 1 L9 2.500 L4.200 9.200 L3.200 9.200 Z" fill="#0a0a0a"/></svg></div>
<div style="position:absolute;left:862px;top:454px;width:20.4px;height:19.6px"><svg viewBox="0 0 20 20" preserveAspectRatio="none"><defs><linearGradient id="sy1" x1="0" y1="0" x2="1" y2="0"><stop offset="0" stop-color="#c9cdd3"/><stop offset="0.45" stop-color="#fafbfc"/><stop offset="1" stop-color="#b9bec6"/></linearGradient></defs><g transform="rotate(-45 10 10)"><path d="M10 15.500 V23.500" stroke="#8f8f8f" stroke-width="1.100"/><rect x="7.300" y="2.800" width="5.400" height="11.200" rx="0.800" fill="url(#sy1)" stroke="#8b9098" stroke-width="0.800"/><rect x="8.400" y="14" width="3.200" height="2" fill="#9aa0a8"/><rect x="8.300" y="7" width="3.400" height="4.500" fill="#5c6068" opacity="0.75"/><rect x="6" y="1.600" width="8" height="1.700" rx="0.500" fill="#a2a7ae"/><rect x="9" y="-2.600" width="2" height="4.400" fill="#c4c8ce" stroke="#9a9fa6" stroke-width="0.500"/><rect x="7" y="-3.900" width="6" height="1.700" rx="0.500" fill="#b4b8be"/></g></svg></div>
<div style="position:absolute;left:907.5px;top:455px;height:18px;line-height:18px;overflow:hidden;font-family:'DejaVu Sans Condensed','Liberation Sans',sans-serif;font-size:13.3px;color:#383838;white-space:nowrap">14:00</div>
<div style="position:absolute;left:776px;top:474px;width:335px;height:20px;background:#dbf0fd;overflow:hidden"></div>
<div style="position:absolute;left:907.5px;top:475px;height:18px;line-height:18px;overflow:hidden;font-family:'DejaVu Sans Condensed','Liberation Sans',sans-serif;font-size:13.3px;color:#3a3a48;white-space:nowrap">14:30</div>
<div style="position:absolute;left:776px;top:494px;width:335px;height:20px;background:#ddfae3;overflow:hidden"></div>
<div style="position:absolute;left:907px;top:494px;width:204px;height:20px;background:#fffbc0"></div>
<div style="position:absolute;left:956.5px;top:495px;width:154px;height:18px;line-height:18px;overflow:hidden;font-family:'DejaVu Sans Condensed','Liberation Sans',sans-serif;font-size:13.3px;color:#383838;white-space:nowrap"><span style="display:inline-block;width:53.5px">000083</span>Клиент 4 - Опре</div>
<div style="position:absolute;left:886.9px;top:498.4px;width:9.5px;height:9.4px"><svg viewBox="0 0 9.5 9.4" preserveAspectRatio="none"><path d="M0.300 4.600 L1.900 3.300 L3.600 5.500 L8.400 0.300 L9.400 1 L9 2.500 L4.200 9.200 L3.200 9.200 Z" fill="#0a0a0a"/></svg></div>
<div style="position:absolute;left:862px;top:497.5px;width:19.2px;height:12.6px"><svg viewBox="0 0 19.2 12.6" preserveAspectRatio="none"><defs><radialGradient id="ey1" cx="0.5" cy="0.5" r="0.5"><stop offset="0" stop-color="#56689c"/><stop offset="0.6" stop-color="#7388bc"/><stop offset="1" stop-color="#8c9ecb"/></radialGradient></defs><path d="M0.600 7 Q9.600 -1.300 18.600 7 Q9.600 14.200 0.600 7 Z" fill="#f4f5f9"/><path d="M0.600 7.200 Q9.600 14.400 18.600 7.200" fill="none" stroke="#8e98cc" stroke-width="1.400"/><circle cx="9.600" cy="6.700" r="4.700" fill="url(#ey1)" stroke="#5b6a9c" stroke-width="0.700"/><circle cx="9.600" cy="6.400" r="1.700" fill="#2a3050"/><circle cx="8.500" cy="5.300" r="0.800" fill="#dfe6f6"/><path d="M0.500 6.900 Q9.600 -2.300 18.700 6.900 Q9.600 0.800 0.500 6.900 Z" fill="#b4713f" stroke="#a86838" stroke-width="0.700"/></svg></div>
<div style="position:absolute;left:907.5px;top:495px;height:18px;line-height:18px;overflow:hidden;font-family:'DejaVu Sans Condensed','Liberation Sans',sans-serif;font-size:13.3px;color:#383838;white-space:nowrap">15:00</div>
<div style="position:absolute;left:776px;top:514px;width:335px;height:20px;background:#dbf0fd;overflow:hidden"></div>
<div style="position:absolute;left:907.5px;top:515px;height:18px;line-height:18px;overflow:hidden;font-family:'DejaVu Sans Condensed','Liberation Sans',sans-serif;font-size:13.3px;color:#3a3a48;white-space:nowrap">15:30</div>
<div style="position:absolute;left:776px;top:534px;width:335px;height:20px;background:#ddfae3;overflow:hidden"></div>
<div style="position:absolute;left:907.5px;top:535px;height:18px;line-height:18px;overflow:hidden;font-family:'DejaVu Sans Condensed','Liberation Sans',sans-serif;font-size:13.3px;color:#3a3a48;white-space:nowrap">16:00</div>
<div style="position:absolute;left:776px;top:554px;width:335px;height:20px;background:#dbf0fd;overflow:hidden"></div>
<div style="position:absolute;left:907.5px;top:555px;height:18px;line-height:18px;overflow:hidden;font-family:'DejaVu Sans Condensed','Liberation Sans',sans-serif;font-size:13.3px;color:#3a3a48;white-space:nowrap">16:30</div>
<div style="position:absolute;left:776px;top:574px;width:335px;height:20px;background:#ddfae3;overflow:hidden"></div>
<div style="position:absolute;left:907.5px;top:575px;height:18px;line-height:18px;overflow:hidden;font-family:'DejaVu Sans Condensed','Liberation Sans',sans-serif;font-size:13.3px;color:#3a3a48;white-space:nowrap">17:00</div>
<div style="position:absolute;left:776px;top:594px;width:335px;height:20px;background:#dbf0fd;overflow:hidden"></div>
<div style="position:absolute;left:907.5px;top:595px;height:18px;line-height:18px;overflow:hidden;font-family:'DejaVu Sans Condensed','Liberation Sans',sans-serif;font-size:13.3px;color:#3a3a48;white-space:nowrap">17:30</div>
<div style="position:absolute;left:776px;top:614px;width:335px;height:20px;background:#dbf0fd"></div>
<div style="position:absolute;left:808px;top:614px;width:303px;height:20px;background:#0080c2"></div>
<div style="position:absolute;left:782px;top:614.4px;width:18px;height:18px"><svg viewBox="0 0 18 18" preserveAspectRatio="none"><circle cx="9" cy="9" r="7.700" fill="#f7fafc" stroke="#454545" stroke-width="1.150"/><path d="M6 6 L11.300 11.300 M11.700 7.200 V11.700 H7.200" fill="none" stroke="#454545" stroke-width="1.300"/></svg></div>
<div style="position:absolute;left:808.5px;top:615px;height:18px;line-height:18px;font-family:'DejaVu Sans Condensed','Liberation Sans',sans-serif;font-size:13.3px;color:#ffffff;white-space:nowrap;letter-spacing:0.057px;">04.09.2024</div>
<div style="position:absolute;left:1010px;top:615px;height:18px;line-height:18px;font-family:'DejaVu Sans Condensed','Liberation Sans',sans-serif;font-size:13.3px;color:#ffffff;white-space:nowrap;">Среда</div>
<div style="position:absolute;left:776px;top:634px;width:335px;height:20px;background:#dbf0fd;overflow:hidden"></div>
<div style="position:absolute;left:907.5px;top:635px;height:18px;line-height:18px;overflow:hidden;font-family:'DejaVu Sans Condensed','Liberation Sans',sans-serif;font-size:13.3px;color:#3a3a48;white-space:nowrap">09:00</div>
<div style="position:absolute;left:776px;top:654px;width:335px;height:20px;background:#ddfae3;overflow:hidden"></div>
<div style="position:absolute;left:907.5px;top:655px;height:18px;line-height:18px;overflow:hidden;font-family:'DejaVu Sans Condensed','Liberation Sans',sans-serif;font-size:13.3px;color:#3a3a48;white-space:nowrap">09:30</div>
<div style="position:absolute;left:776px;top:674px;width:335px;height:20px;background:#dbf0fd;overflow:hidden"></div>
<div style="position:absolute;left:907.5px;top:675px;height:18px;line-height:18px;overflow:hidden;font-family:'DejaVu Sans Condensed','Liberation Sans',sans-serif;font-size:13.3px;color:#3a3a48;white-space:nowrap">10:00</div>
<div style="position:absolute;left:776px;top:694px;width:335px;height:20px;background:#ddfae3;overflow:hidden"></div>
<div style="position:absolute;left:907.5px;top:695px;height:18px;line-height:18px;overflow:hidden;font-family:'DejaVu Sans Condensed','Liberation Sans',sans-serif;font-size:13.3px;color:#3a3a48;white-space:nowrap">10:30</div>
<div style="position:absolute;left:776px;top:714px;width:335px;height:20px;background:#dbf0fd;overflow:hidden"></div>
<div style="position:absolute;left:907.5px;top:715px;height:18px;line-height:18px;overflow:hidden;font-family:'DejaVu Sans Condensed','Liberation Sans',sans-serif;font-size:13.3px;color:#3a3a48;white-space:nowrap">11:00</div>
<div style="position:absolute;left:776px;top:734px;width:335px;height:20px;background:#ddfae3;overflow:hidden"></div>
<div style="position:absolute;left:907.5px;top:735px;height:18px;line-height:18px;overflow:hidden;font-family:'DejaVu Sans Condensed','Liberation Sans',sans-serif;font-size:13.3px;color:#3a3a48;white-space:nowrap">11:30</div>
<div style="position:absolute;left:776px;top:754px;width:335px;height:20px;background:#dbf0fd;overflow:hidden"></div>
<div style="position:absolute;left:907.5px;top:755px;height:18px;line-height:18px;overflow:hidden;font-family:'DejaVu Sans Condensed','Liberation Sans',sans-serif;font-size:13.3px;color:#3a3a48;white-space:nowrap">12:00</div>
<div style="position:absolute;left:776px;top:774px;width:335px;height:20px;background:#ddfae3;overflow:hidden"></div>
<div style="position:absolute;left:907.5px;top:775px;height:18px;line-height:18px;overflow:hidden;font-family:'DejaVu Sans Condensed','Liberation Sans',sans-serif;font-size:13.3px;color:#3a3a48;white-space:nowrap">12:30</div>
<div style="position:absolute;left:776px;top:794px;width:335px;height:20px;background:#dbf0fd;overflow:hidden"></div>
<div style="position:absolute;left:907.5px;top:795px;height:18px;line-height:18px;overflow:hidden;font-family:'DejaVu Sans Condensed','Liberation Sans',sans-serif;font-size:13.3px;color:#3a3a48;white-space:nowrap">13:00</div>
<div style="position:absolute;left:776px;top:814px;width:335px;height:16px;background:#ddfae3;overflow:hidden"></div>
<div style="position:absolute;left:907.5px;top:815px;height:15px;line-height:18px;overflow:hidden;font-family:'DejaVu Sans Condensed','Liberation Sans',sans-serif;font-size:13.3px;color:#3a3a48;white-space:nowrap">13:30</div>
<div style="position:absolute;left:1113px;top:167px;width:18px;height:663px;background:#fff"></div>
<div style="position:absolute;left:1117px;top:188px;width:10px;height:488px;background:#b9b9b9"></div>
<div style="position:absolute;left:1118px;top:175px;width:0;height:0;border-left:4px solid transparent;border-right:4px solid transparent;border-bottom:4px solid #7a7a7a"></div>
<div style="position:absolute;left:1118px;top:817px;width:0;height:0;border-left:4px solid transparent;border-right:4px solid transparent;border-top:4px solid #7a7a7a"></div>
<div style="position:absolute;left:22px;top:862px;width:155px;height:53px;border:1px solid #c9c9c9;border-bottom:none;background:#fff;box-sizing:border-box"></div>
<div style="position:absolute;left:22px;top:915px;width:155px;height:3px;background:#1ea0ee"></div>
<div style="position:absolute;left:40px;top:878px;width:30.5px;height:26px"><svg viewBox="0 0 31 27" preserveAspectRatio="none"><defs><linearGradient id="wn1" x1="0" y1="0" x2="0" y2="1"><stop offset="0" stop-color="#f2f5fb"/><stop offset="1" stop-color="#dde4f4"/></linearGradient><linearGradient id="wn2" x1="0" y1="0" x2="0" y2="1"><stop offset="0" stop-color="#8fb0e4"/><stop offset="1" stop-color="#6f93d6"/></linearGradient></defs><rect x="0.700" y="0.700" width="29.600" height="25.600" rx="2.500" fill="url(#wn1)" stroke="#8f9ccc" stroke-width="1.400"/><path d="M1.400 7.500 V3.200 Q1.400 1.400 3.200 1.400 H27.800 Q29.600 1.400 29.600 3.200 V7.500 Z" fill="url(#wn2)"/><rect x="24.300" y="2.800" width="2.600" height="2.600" fill="#e8584a"/></svg></div>
<div style="position:absolute;left:82px;top:882px;height:18px;line-height:18px;font-family:'DejaVu Sans Condensed','Liberation Sans',sans-serif;font-size:13.3px;color:#1e98e6;white-space:nowrap;letter-spacing:-0.3px;">Запись</div>
<div style="position:absolute;left:145px;top:885px;width:12px;height:10px"><svg viewBox="0 0 12 10" preserveAspectRatio="none"><path d="M1.2 1 L10.8 9 M10.8 1 L1.2 9" stroke="#1e98e6" stroke-width="2.2" fill="none"/></svg></div>
<div style="position:absolute;left:28px;top:920px;width:21px;height:21px"><svg viewBox="0 0 21 21" preserveAspectRatio="none"><circle cx="10.500" cy="10.500" r="10" fill="#3f7fc0"/><circle cx="10.500" cy="5.800" r="1.700" fill="#fff"/><rect x="9" y="8.800" width="3" height="7.700" rx="0.500" fill="#fff"/></svg></div>
<div style="position:absolute;left:70px;top:923px;height:18px;line-height:18px;font-family:'DejaVu Sans Condensed','Liberation Sans',sans-serif;font-size:13.3px;color:#303030;white-space:nowrap;letter-spacing:0.132px;">7.3.9061.10 Standard</div>
<div style="position:absolute;left:229px;top:922px;width:1px;height:19px;background:#c0c0c0"></div>
<div style="position:absolute;left:399px;top:922px;width:1px;height:19px;background:#c0c0c0"></div>
<div style="position:absolute;left:578px;top:922px;width:1px;height:19px;background:#c0c0c0"></div>
<div style="position:absolute;left:726px;top:922px;width:1px;height:19px;background:#c0c0c0"></div>
<div style="position:absolute;left:875px;top:922px;width:1px;height:19px;background:#c0c0c0"></div>
<div style="position:absolute;left:1108px;top:922px;width:1px;height:19px;background:#c0c0c0"></div>
<div style="position:absolute;left:243.4px;top:920px;width:15.7px;height:19px"><svg viewBox="0 0 15.7 19" preserveAspectRatio="none"><defs><linearGradient id="db1" x1="0" y1="0" x2="1" y2="0"><stop offset="0" stop-color="#f2b452"/><stop offset="0.22" stop-color="#fff7dc"/><stop offset="0.5" stop-color="#fbd268"/><stop offset="0.82" stop-color="#f09a30"/><stop offset="1" stop-color="#f0b050"/></linearGradient></defs><rect x="0.600" y="0.600" width="14.500" height="17.800" rx="3" ry="3.200" fill="url(#db1)" stroke="#dd9a44" stroke-width="1.100"/><ellipse cx="7.850" cy="3.300" rx="5.800" ry="1.900" fill="#fffbe8" opacity="0.9"/><path d="M1.200 8.400 Q7.850 9.800 14.500 8.400 M1.200 13.200 Q7.850 14.600 14.500 13.200" fill="none" stroke="#d8802a" stroke-width="1" opacity="0.85"/><path d="M2 6.500 Q7.850 7.700 13.700 6.500 M2 11.300 Q7.850 12.500 13.700 11.300 M2 16 Q7.850 17.200 13.700 16" fill="none" stroke="#fff4c8" stroke-width="0.800" opacity="0.6"/></svg></div>
<div style="position:absolute;left:281.5px;top:923px;height:18px;line-height:18px;font-family:'DejaVu Sans Condensed','Liberation Sans',sans-serif;font-size:13.3px;color:#303030;white-space:nowrap;letter-spacing:0.045px;">localhost (utf8)</div>
<div style="position:absolute;left:411.6px;top:920.4px;width:20px;height:19.5px"><svg viewBox="0 0 18.2 18.6" preserveAspectRatio="none"><defs><linearGradient id="ub" x1="0" y1="0" x2="0" y2="1"><stop offset="0" stop-color="#9ad24a"/><stop offset="0.55" stop-color="#86c43a"/><stop offset="1" stop-color="#5f9f1e"/></linearGradient><linearGradient id="uf" x1="0" y1="0" x2="0" y2="1"><stop offset="0" stop-color="#fbe6c4"/><stop offset="0.6" stop-color="#f2c49a"/><stop offset="1" stop-color="#d98a62"/></linearGradient><linearGradient id="uh" x1="0" y1="0" x2="0" y2="1"><stop offset="0" stop-color="#d99a62"/><stop offset="0.35" stop-color="#c98048"/><stop offset="1" stop-color="#a86430"/></linearGradient></defs><g transform="translate(0.00 0.00) scale(1.000)"><path d="M0.3 15 Q0.3 12.200 5 11.600 Q9.100 10.900 13.200 11.600 Q17.900 12.200 17.900 15 Q17.900 18.300 9.100 18.300 Q0.300 18.300 0.300 15 Z" fill="url(#ub)" stroke="#6aa030" stroke-width="0.4" stroke-opacity="0.7"/><ellipse cx="9.1" cy="13.600" rx="5.800" ry="1.700" fill="#b4e070" opacity="0.55"/><ellipse cx="9.200" cy="8.500" rx="2.900" ry="4.900" fill="url(#uf)"/><path d="M3.900 6 Q3.500 0.400 9.100 0.400 Q14.700 0.400 14.300 6 Q14.400 8.600 13.100 9.600 L11.900 9.400 Q12.300 6.200 11.500 4.700 Q9 3.500 6.900 4.700 Q6.100 6.200 6.500 9.400 L5.300 9.600 Q3.800 8.600 3.900 6 Z" fill="url(#uh)"/></g></svg></div>
<div style="position:absolute;left:451.5px;top:923px;height:18px;line-height:18px;font-family:'DejaVu Sans Condensed','Liberation Sans',sans-serif;font-size:13.3px;color:#303030;white-space:nowrap;letter-spacing:0.419px;">NIKOLAY (MAIN)</div>
<div style="position:absolute;left:591px;top:921px;width:18px;height:18px"><svg viewBox="0 0 18 18" preserveAspectRatio="none"><defs><linearGradient id="c31" x1="0" y1="0" x2="0" y2="1"><stop offset="0" stop-color="#e4553e"/><stop offset="0.5" stop-color="#f08a72"/><stop offset="1" stop-color="#e2553c"/></linearGradient></defs><rect x="0.700" y="0.700" width="16.600" height="16.600" rx="1.200" fill="#fdfdff" stroke="#8c9ade" stroke-width="1.400"/><path d="M0.200 5.300 V1.500 Q0.200 0.200 1.500 0.200 H16.500 Q17.800 0.200 17.800 1.500 V5.300 Z" fill="url(#c31)"/><text x="9.100" y="15" text-anchor="middle" font-family="Liberation Sans,sans-serif" font-weight="bold" font-size="10.900" letter-spacing="-0.300" fill="#2c365e">31</text></svg></div>
<div style="position:absolute;left:631px;top:923px;height:18px;line-height:18px;font-family:'DejaVu Sans Condensed','Liberation Sans',sans-serif;font-size:13.3px;color:#303030;white-space:nowrap;letter-spacing:0.091px;">03.09.2024</div>
<div style="position:absolute;left:762px;top:923px;height:18px;line-height:18px;font-family:'DejaVu Sans Condensed','Liberation Sans',sans-serif;font-size:13.3px;color:#303030;white-space:nowrap;letter-spacing:0.173px;">00:00:00:001</div>
<div style="position:absolute;left:887.7px;top:923px;height:18px;line-height:18px;font-family:'DejaVu Sans Condensed','Liberation Sans',sans-serif;font-size:13.3px;color:#303030;white-space:nowrap;letter-spacing:-0.154px;">Вторник</div>
<div style="position:absolute;left:1123px;top:926px;width:14px;height:15px"><svg viewBox="0 0 14 15" preserveAspectRatio="none"><path d="M10.8 2.4H13.8M12.3 0.8999999999999999V3.9" stroke="#8a8a8a" stroke-width="1"/><path d="M5.8 7.5H8.8M7.3 6.0V9.0" stroke="#8a8a8a" stroke-width="1"/><path d="M10.8 7.5H13.8M12.3 6.0V9.0" stroke="#8a8a8a" stroke-width="1"/><path d="M0.7999999999999998 12.5H3.8M2.3 11.0V14.0" stroke="#8a8a8a" stroke-width="1"/><path d="M5.8 12.5H8.8M7.3 11.0V14.0" stroke="#8a8a8a" stroke-width="1"/><path d="M10.8 12.5H13.8M12.3 11.0V14.0" stroke="#8a8a8a" stroke-width="1"/></svg></div>
<div id="win"></div>
</body></html>
